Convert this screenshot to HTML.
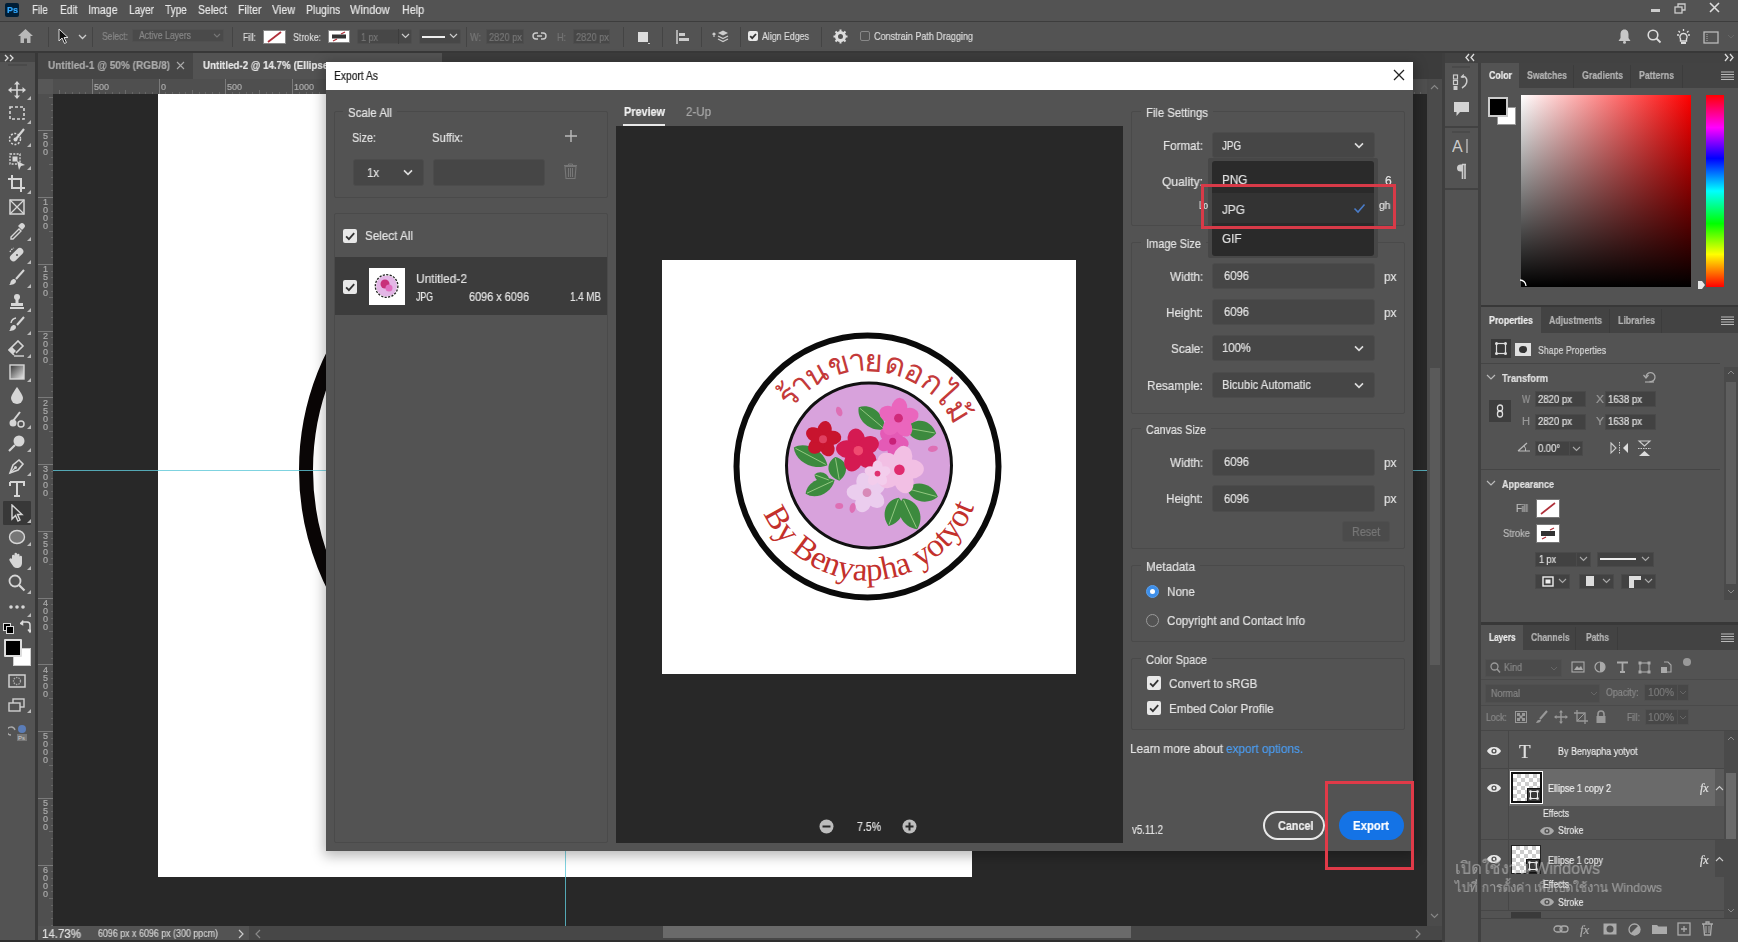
<!DOCTYPE html><html><head><meta charset="utf-8"><style>
html,body{margin:0;padding:0;width:1738px;height:942px;overflow:hidden;background:#535353;font-family:"Liberation Sans",sans-serif}
.a{position:absolute;box-sizing:border-box}
.t{position:absolute;white-space:nowrap;-webkit-text-stroke:0.2px currentColor;will-change:transform}
</style></head><body>
<div class="a " style="left:0px;top:0px;width:1738px;height:21px;background:#535353"></div>
<div class="a " style="left:0px;top:21px;width:1738px;height:1px;background:#3d3d3d"></div>
<div class="a " style="left:0px;top:22px;width:1738px;height:29px;background:#535353"></div>
<div class="a " style="left:0px;top:51px;width:1738px;height:2px;background:#383838"></div>
<div class="a " style="left:0px;top:53px;width:35px;height:889px;background:#535353"></div>
<div class="a " style="left:0px;top:53px;width:35px;height:9px;background:#454545"></div>
<div class="a " style="left:35px;top:53px;width:3px;height:889px;background:#383838"></div>
<div class="a " style="left:38px;top:53px;width:1404px;height:26px;background:#3c3c3c"></div>
<div class="a " style="left:38px;top:53px;width:155px;height:26px;background:#464646"></div>
<div class="a " style="left:193px;top:53px;width:249px;height:26px;background:#535353"></div>
<div class="a " style="left:38px;top:79px;width:1389px;height:15px;background:#4f4f4f"></div>
<div class="a " style="left:38px;top:79px;width:15px;height:847px;background:#4f4f4f"></div>
<div class="a " style="left:38px;top:79px;width:15px;height:15px;background:#555"></div>
<div class="a " style="left:53px;top:94px;width:1374px;height:832px;background:#282828"></div>
<div class="a " style="left:158px;top:94px;width:814px;height:783px;background:#fff"></div>
<div class="a " style="left:1427px;top:79px;width:15px;height:847px;background:#4b4b4b"></div>
<div class="a " style="left:38px;top:926px;width:211px;height:14px;background:#535353"></div>
<div class="a " style="left:249px;top:926px;width:1178px;height:14px;background:#474747"></div>
<div class="a " style="left:663px;top:926px;width:468px;height:12px;background:#6a6a6a"></div>
<div class="a " style="left:1427px;top:926px;width:15px;height:14px;background:#474747"></div>
<div class="a " style="left:0px;top:940px;width:1738px;height:2px;background:#2e2e2e"></div>
<div class="a " style="left:1442px;top:53px;width:3px;height:889px;background:#3e3e3e"></div>
<div class="a " style="left:1445px;top:53px;width:293px;height:10px;background:#424242"></div>
<div class="a " style="left:1445px;top:63px;width:33px;height:879px;background:#535353"></div>
<div class="a " style="left:1478px;top:63px;width:3px;height:879px;background:#404040"></div>
<div class="a " style="left:1481px;top:63px;width:257px;height:879px;background:#535353"></div>
<div class="a" style="left:58.6px;top:90px;width:1px;height:4px;background:#6a6a6a"></div>
<div class="a" style="left:65.2px;top:92px;width:1px;height:2px;background:#666"></div>
<div class="a" style="left:71.9px;top:92px;width:1px;height:2px;background:#666"></div>
<div class="a" style="left:78.6px;top:92px;width:1px;height:2px;background:#666"></div>
<div class="a" style="left:85.3px;top:92px;width:1px;height:2px;background:#666"></div>
<div class="a" style="left:91.9px;top:79px;width:1px;height:15px;background:#7a7a7a"></div>
<div class="a" style="left:98.6px;top:92px;width:1px;height:2px;background:#666"></div>
<div class="a" style="left:105.3px;top:92px;width:1px;height:2px;background:#666"></div>
<div class="a" style="left:112.0px;top:92px;width:1px;height:2px;background:#666"></div>
<div class="a" style="left:118.6px;top:92px;width:1px;height:2px;background:#666"></div>
<div class="a" style="left:125.3px;top:90px;width:1px;height:4px;background:#6a6a6a"></div>
<div class="a" style="left:132.0px;top:92px;width:1px;height:2px;background:#666"></div>
<div class="a" style="left:138.7px;top:92px;width:1px;height:2px;background:#666"></div>
<div class="a" style="left:145.3px;top:92px;width:1px;height:2px;background:#666"></div>
<div class="a" style="left:152.0px;top:92px;width:1px;height:2px;background:#666"></div>
<div class="a" style="left:158.7px;top:79px;width:1px;height:15px;background:#7a7a7a"></div>
<div class="a" style="left:165.4px;top:92px;width:1px;height:2px;background:#666"></div>
<div class="a" style="left:172.0px;top:92px;width:1px;height:2px;background:#666"></div>
<div class="a" style="left:178.7px;top:92px;width:1px;height:2px;background:#666"></div>
<div class="a" style="left:185.4px;top:92px;width:1px;height:2px;background:#666"></div>
<div class="a" style="left:192.1px;top:90px;width:1px;height:4px;background:#6a6a6a"></div>
<div class="a" style="left:198.8px;top:92px;width:1px;height:2px;background:#666"></div>
<div class="a" style="left:205.4px;top:92px;width:1px;height:2px;background:#666"></div>
<div class="a" style="left:212.1px;top:92px;width:1px;height:2px;background:#666"></div>
<div class="a" style="left:218.8px;top:92px;width:1px;height:2px;background:#666"></div>
<div class="a" style="left:225.4px;top:79px;width:1px;height:15px;background:#7a7a7a"></div>
<div class="a" style="left:232.1px;top:92px;width:1px;height:2px;background:#666"></div>
<div class="a" style="left:238.8px;top:92px;width:1px;height:2px;background:#666"></div>
<div class="a" style="left:245.5px;top:92px;width:1px;height:2px;background:#666"></div>
<div class="a" style="left:252.1px;top:92px;width:1px;height:2px;background:#666"></div>
<div class="a" style="left:258.8px;top:90px;width:1px;height:4px;background:#6a6a6a"></div>
<div class="a" style="left:265.5px;top:92px;width:1px;height:2px;background:#666"></div>
<div class="a" style="left:272.2px;top:92px;width:1px;height:2px;background:#666"></div>
<div class="a" style="left:278.9px;top:92px;width:1px;height:2px;background:#666"></div>
<div class="a" style="left:285.5px;top:92px;width:1px;height:2px;background:#666"></div>
<div class="a" style="left:292.2px;top:79px;width:1px;height:15px;background:#7a7a7a"></div>
<div class="a" style="left:298.9px;top:92px;width:1px;height:2px;background:#666"></div>
<div class="a" style="left:305.6px;top:92px;width:1px;height:2px;background:#666"></div>
<div class="a" style="left:312.2px;top:92px;width:1px;height:2px;background:#666"></div>
<div class="a" style="left:318.9px;top:92px;width:1px;height:2px;background:#666"></div>
<div class="a" style="left:325.6px;top:90px;width:1px;height:4px;background:#6a6a6a"></div>
<div class="a" style="left:332.2px;top:92px;width:1px;height:2px;background:#666"></div>
<div class="a" style="left:338.9px;top:92px;width:1px;height:2px;background:#666"></div>
<div class="a" style="left:345.6px;top:92px;width:1px;height:2px;background:#666"></div>
<div class="a" style="left:352.3px;top:92px;width:1px;height:2px;background:#666"></div>
<div class="a" style="left:358.9px;top:79px;width:1px;height:15px;background:#7a7a7a"></div>
<div class="a" style="left:365.6px;top:92px;width:1px;height:2px;background:#666"></div>
<div class="a" style="left:372.3px;top:92px;width:1px;height:2px;background:#666"></div>
<div class="a" style="left:379.0px;top:92px;width:1px;height:2px;background:#666"></div>
<div class="a" style="left:385.6px;top:92px;width:1px;height:2px;background:#666"></div>
<div class="a" style="left:392.3px;top:90px;width:1px;height:4px;background:#6a6a6a"></div>
<div class="a" style="left:399.0px;top:92px;width:1px;height:2px;background:#666"></div>
<div class="a" style="left:405.7px;top:92px;width:1px;height:2px;background:#666"></div>
<div class="a" style="left:412.3px;top:92px;width:1px;height:2px;background:#666"></div>
<div class="a" style="left:419.0px;top:92px;width:1px;height:2px;background:#666"></div>
<div class="a" style="left:425.7px;top:79px;width:1px;height:15px;background:#7a7a7a"></div>
<div class="a" style="left:432.4px;top:92px;width:1px;height:2px;background:#666"></div>
<div class="a" style="left:439.1px;top:92px;width:1px;height:2px;background:#666"></div>
<div class="a" style="left:445.7px;top:92px;width:1px;height:2px;background:#666"></div>
<div class="a" style="left:452.4px;top:92px;width:1px;height:2px;background:#666"></div>
<div class="a" style="left:459.1px;top:90px;width:1px;height:4px;background:#6a6a6a"></div>
<div class="a" style="left:465.7px;top:92px;width:1px;height:2px;background:#666"></div>
<div class="a" style="left:472.4px;top:92px;width:1px;height:2px;background:#666"></div>
<div class="a" style="left:479.1px;top:92px;width:1px;height:2px;background:#666"></div>
<div class="a" style="left:485.8px;top:92px;width:1px;height:2px;background:#666"></div>
<div class="a" style="left:492.4px;top:79px;width:1px;height:15px;background:#7a7a7a"></div>
<div class="a" style="left:499.1px;top:92px;width:1px;height:2px;background:#666"></div>
<div class="a" style="left:505.8px;top:92px;width:1px;height:2px;background:#666"></div>
<div class="a" style="left:512.5px;top:92px;width:1px;height:2px;background:#666"></div>
<div class="a" style="left:519.2px;top:92px;width:1px;height:2px;background:#666"></div>
<div class="a" style="left:525.8px;top:90px;width:1px;height:4px;background:#6a6a6a"></div>
<div class="a" style="left:532.5px;top:92px;width:1px;height:2px;background:#666"></div>
<div class="a" style="left:539.2px;top:92px;width:1px;height:2px;background:#666"></div>
<div class="a" style="left:545.8px;top:92px;width:1px;height:2px;background:#666"></div>
<div class="a" style="left:552.5px;top:92px;width:1px;height:2px;background:#666"></div>
<div class="a" style="left:559.2px;top:79px;width:1px;height:15px;background:#7a7a7a"></div>
<div class="a" style="left:565.9px;top:92px;width:1px;height:2px;background:#666"></div>
<div class="a" style="left:572.5px;top:92px;width:1px;height:2px;background:#666"></div>
<div class="a" style="left:579.2px;top:92px;width:1px;height:2px;background:#666"></div>
<div class="a" style="left:585.9px;top:92px;width:1px;height:2px;background:#666"></div>
<div class="a" style="left:592.6px;top:90px;width:1px;height:4px;background:#6a6a6a"></div>
<div class="a" style="left:599.2px;top:92px;width:1px;height:2px;background:#666"></div>
<div class="a" style="left:605.9px;top:92px;width:1px;height:2px;background:#666"></div>
<div class="a" style="left:612.6px;top:92px;width:1px;height:2px;background:#666"></div>
<div class="a" style="left:619.3px;top:92px;width:1px;height:2px;background:#666"></div>
<div class="a" style="left:626.0px;top:79px;width:1px;height:15px;background:#7a7a7a"></div>
<div class="a" style="left:632.6px;top:92px;width:1px;height:2px;background:#666"></div>
<div class="a" style="left:639.3px;top:92px;width:1px;height:2px;background:#666"></div>
<div class="a" style="left:646.0px;top:92px;width:1px;height:2px;background:#666"></div>
<div class="a" style="left:652.7px;top:92px;width:1px;height:2px;background:#666"></div>
<div class="a" style="left:659.3px;top:90px;width:1px;height:4px;background:#6a6a6a"></div>
<div class="a" style="left:666.0px;top:92px;width:1px;height:2px;background:#666"></div>
<div class="a" style="left:672.7px;top:92px;width:1px;height:2px;background:#666"></div>
<div class="a" style="left:679.3px;top:92px;width:1px;height:2px;background:#666"></div>
<div class="a" style="left:686.0px;top:92px;width:1px;height:2px;background:#666"></div>
<div class="a" style="left:692.7px;top:79px;width:1px;height:15px;background:#7a7a7a"></div>
<div class="a" style="left:699.4px;top:92px;width:1px;height:2px;background:#666"></div>
<div class="a" style="left:706.0px;top:92px;width:1px;height:2px;background:#666"></div>
<div class="a" style="left:712.7px;top:92px;width:1px;height:2px;background:#666"></div>
<div class="a" style="left:719.4px;top:92px;width:1px;height:2px;background:#666"></div>
<div class="a" style="left:726.1px;top:90px;width:1px;height:4px;background:#6a6a6a"></div>
<div class="a" style="left:732.8px;top:92px;width:1px;height:2px;background:#666"></div>
<div class="a" style="left:739.4px;top:92px;width:1px;height:2px;background:#666"></div>
<div class="a" style="left:746.1px;top:92px;width:1px;height:2px;background:#666"></div>
<div class="a" style="left:752.8px;top:92px;width:1px;height:2px;background:#666"></div>
<div class="a" style="left:759.5px;top:79px;width:1px;height:15px;background:#7a7a7a"></div>
<div class="a" style="left:766.1px;top:92px;width:1px;height:2px;background:#666"></div>
<div class="a" style="left:772.8px;top:92px;width:1px;height:2px;background:#666"></div>
<div class="a" style="left:779.5px;top:92px;width:1px;height:2px;background:#666"></div>
<div class="a" style="left:786.2px;top:92px;width:1px;height:2px;background:#666"></div>
<div class="a" style="left:792.8px;top:90px;width:1px;height:4px;background:#6a6a6a"></div>
<div class="a" style="left:799.5px;top:92px;width:1px;height:2px;background:#666"></div>
<div class="a" style="left:806.2px;top:92px;width:1px;height:2px;background:#666"></div>
<div class="a" style="left:812.9px;top:92px;width:1px;height:2px;background:#666"></div>
<div class="a" style="left:819.5px;top:92px;width:1px;height:2px;background:#666"></div>
<div class="a" style="left:826.2px;top:79px;width:1px;height:15px;background:#7a7a7a"></div>
<div class="a" style="left:832.9px;top:92px;width:1px;height:2px;background:#666"></div>
<div class="a" style="left:839.5px;top:92px;width:1px;height:2px;background:#666"></div>
<div class="a" style="left:846.2px;top:92px;width:1px;height:2px;background:#666"></div>
<div class="a" style="left:852.9px;top:92px;width:1px;height:2px;background:#666"></div>
<div class="a" style="left:859.6px;top:90px;width:1px;height:4px;background:#6a6a6a"></div>
<div class="a" style="left:866.2px;top:92px;width:1px;height:2px;background:#666"></div>
<div class="a" style="left:872.9px;top:92px;width:1px;height:2px;background:#666"></div>
<div class="a" style="left:879.6px;top:92px;width:1px;height:2px;background:#666"></div>
<div class="a" style="left:886.3px;top:92px;width:1px;height:2px;background:#666"></div>
<div class="a" style="left:893.0px;top:79px;width:1px;height:15px;background:#7a7a7a"></div>
<div class="a" style="left:899.6px;top:92px;width:1px;height:2px;background:#666"></div>
<div class="a" style="left:906.3px;top:92px;width:1px;height:2px;background:#666"></div>
<div class="a" style="left:913.0px;top:92px;width:1px;height:2px;background:#666"></div>
<div class="a" style="left:919.7px;top:92px;width:1px;height:2px;background:#666"></div>
<div class="a" style="left:926.3px;top:90px;width:1px;height:4px;background:#6a6a6a"></div>
<div class="a" style="left:933.0px;top:92px;width:1px;height:2px;background:#666"></div>
<div class="a" style="left:939.7px;top:92px;width:1px;height:2px;background:#666"></div>
<div class="a" style="left:946.4px;top:92px;width:1px;height:2px;background:#666"></div>
<div class="a" style="left:953.0px;top:92px;width:1px;height:2px;background:#666"></div>
<div class="a" style="left:959.7px;top:79px;width:1px;height:15px;background:#7a7a7a"></div>
<div class="a" style="left:966.4px;top:92px;width:1px;height:2px;background:#666"></div>
<div class="a" style="left:973.0px;top:92px;width:1px;height:2px;background:#666"></div>
<div class="a" style="left:979.7px;top:92px;width:1px;height:2px;background:#666"></div>
<div class="a" style="left:986.4px;top:92px;width:1px;height:2px;background:#666"></div>
<div class="a" style="left:993.1px;top:90px;width:1px;height:4px;background:#6a6a6a"></div>
<div class="a" style="left:999.8px;top:92px;width:1px;height:2px;background:#666"></div>
<div class="a" style="left:1006.4px;top:92px;width:1px;height:2px;background:#666"></div>
<div class="a" style="left:1013.1px;top:92px;width:1px;height:2px;background:#666"></div>
<div class="a" style="left:1019.8px;top:92px;width:1px;height:2px;background:#666"></div>
<div class="a" style="left:1026.5px;top:79px;width:1px;height:15px;background:#7a7a7a"></div>
<div class="a" style="left:1033.1px;top:92px;width:1px;height:2px;background:#666"></div>
<div class="a" style="left:1039.8px;top:92px;width:1px;height:2px;background:#666"></div>
<div class="a" style="left:1046.5px;top:92px;width:1px;height:2px;background:#666"></div>
<div class="a" style="left:1053.2px;top:92px;width:1px;height:2px;background:#666"></div>
<div class="a" style="left:1059.8px;top:90px;width:1px;height:4px;background:#6a6a6a"></div>
<div class="a" style="left:1066.5px;top:92px;width:1px;height:2px;background:#666"></div>
<div class="a" style="left:1073.2px;top:92px;width:1px;height:2px;background:#666"></div>
<div class="a" style="left:1079.9px;top:92px;width:1px;height:2px;background:#666"></div>
<div class="a" style="left:1086.5px;top:92px;width:1px;height:2px;background:#666"></div>
<div class="a" style="left:1093.2px;top:79px;width:1px;height:15px;background:#7a7a7a"></div>
<div class="a" style="left:1099.9px;top:92px;width:1px;height:2px;background:#666"></div>
<div class="a" style="left:1106.5px;top:92px;width:1px;height:2px;background:#666"></div>
<div class="a" style="left:1113.2px;top:92px;width:1px;height:2px;background:#666"></div>
<div class="a" style="left:1119.9px;top:92px;width:1px;height:2px;background:#666"></div>
<div class="a" style="left:1126.6px;top:90px;width:1px;height:4px;background:#6a6a6a"></div>
<div class="a" style="left:1133.2px;top:92px;width:1px;height:2px;background:#666"></div>
<div class="a" style="left:1139.9px;top:92px;width:1px;height:2px;background:#666"></div>
<div class="a" style="left:1146.6px;top:92px;width:1px;height:2px;background:#666"></div>
<div class="a" style="left:1153.3px;top:92px;width:1px;height:2px;background:#666"></div>
<div class="a" style="left:1160.0px;top:79px;width:1px;height:15px;background:#7a7a7a"></div>
<div class="a" style="left:1166.6px;top:92px;width:1px;height:2px;background:#666"></div>
<div class="a" style="left:1173.3px;top:92px;width:1px;height:2px;background:#666"></div>
<div class="a" style="left:1180.0px;top:92px;width:1px;height:2px;background:#666"></div>
<div class="a" style="left:1186.7px;top:92px;width:1px;height:2px;background:#666"></div>
<div class="a" style="left:1193.3px;top:90px;width:1px;height:4px;background:#6a6a6a"></div>
<div class="a" style="left:1200.0px;top:92px;width:1px;height:2px;background:#666"></div>
<div class="a" style="left:1206.7px;top:92px;width:1px;height:2px;background:#666"></div>
<div class="a" style="left:1213.4px;top:92px;width:1px;height:2px;background:#666"></div>
<div class="a" style="left:1220.0px;top:92px;width:1px;height:2px;background:#666"></div>
<div class="a" style="left:1226.7px;top:79px;width:1px;height:15px;background:#7a7a7a"></div>
<div class="a" style="left:1233.4px;top:92px;width:1px;height:2px;background:#666"></div>
<div class="a" style="left:1240.0px;top:92px;width:1px;height:2px;background:#666"></div>
<div class="a" style="left:1246.7px;top:92px;width:1px;height:2px;background:#666"></div>
<div class="a" style="left:1253.4px;top:92px;width:1px;height:2px;background:#666"></div>
<div class="a" style="left:1260.1px;top:90px;width:1px;height:4px;background:#6a6a6a"></div>
<div class="a" style="left:1266.8px;top:92px;width:1px;height:2px;background:#666"></div>
<div class="a" style="left:1273.4px;top:92px;width:1px;height:2px;background:#666"></div>
<div class="a" style="left:1280.1px;top:92px;width:1px;height:2px;background:#666"></div>
<div class="a" style="left:1286.8px;top:92px;width:1px;height:2px;background:#666"></div>
<div class="a" style="left:1293.5px;top:79px;width:1px;height:15px;background:#7a7a7a"></div>
<div class="a" style="left:1300.1px;top:92px;width:1px;height:2px;background:#666"></div>
<div class="a" style="left:1306.8px;top:92px;width:1px;height:2px;background:#666"></div>
<div class="a" style="left:1313.5px;top:92px;width:1px;height:2px;background:#666"></div>
<div class="a" style="left:1320.1px;top:92px;width:1px;height:2px;background:#666"></div>
<div class="a" style="left:1326.8px;top:90px;width:1px;height:4px;background:#6a6a6a"></div>
<div class="a" style="left:1333.5px;top:92px;width:1px;height:2px;background:#666"></div>
<div class="a" style="left:1340.2px;top:92px;width:1px;height:2px;background:#666"></div>
<div class="a" style="left:1346.9px;top:92px;width:1px;height:2px;background:#666"></div>
<div class="a" style="left:1353.5px;top:92px;width:1px;height:2px;background:#666"></div>
<div class="a" style="left:1360.2px;top:79px;width:1px;height:15px;background:#7a7a7a"></div>
<div class="a" style="left:1366.9px;top:92px;width:1px;height:2px;background:#666"></div>
<div class="a" style="left:1373.5px;top:92px;width:1px;height:2px;background:#666"></div>
<div class="a" style="left:1380.2px;top:92px;width:1px;height:2px;background:#666"></div>
<div class="a" style="left:1386.9px;top:92px;width:1px;height:2px;background:#666"></div>
<div class="a" style="left:1393.6px;top:90px;width:1px;height:4px;background:#6a6a6a"></div>
<div class="a" style="left:1400.3px;top:92px;width:1px;height:2px;background:#666"></div>
<div class="a" style="left:1406.9px;top:92px;width:1px;height:2px;background:#666"></div>
<div class="a" style="left:1413.6px;top:92px;width:1px;height:2px;background:#666"></div>
<div class="a" style="left:1420.3px;top:92px;width:1px;height:2px;background:#666"></div>
<div class="t" style="left:93.9px;top:82.7px;font-size:9px;line-height:9px;color:#aaa;font-weight:normal;font-family:'Liberation Sans', sans-serif;">500</div>
<div class="t" style="left:160.7px;top:82.7px;font-size:9px;line-height:9px;color:#aaa;font-weight:normal;font-family:'Liberation Sans', sans-serif;">0</div>
<div class="t" style="left:227.4px;top:82.7px;font-size:9px;line-height:9px;color:#aaa;font-weight:normal;font-family:'Liberation Sans', sans-serif;">500</div>
<div class="t" style="left:294.2px;top:82.7px;font-size:9px;line-height:9px;color:#aaa;font-weight:normal;font-family:'Liberation Sans', sans-serif;">1000</div>
<div class="t" style="left:360.9px;top:82.7px;font-size:9px;line-height:9px;color:#aaa;font-weight:normal;font-family:'Liberation Sans', sans-serif;">1500</div>
<div class="a" style="left:49px;top:97.0px;width:4px;height:1px;background:#6a6a6a"></div>
<div class="a" style="left:51px;top:103.7px;width:2px;height:1px;background:#666"></div>
<div class="a" style="left:51px;top:110.3px;width:2px;height:1px;background:#666"></div>
<div class="a" style="left:51px;top:117.0px;width:2px;height:1px;background:#666"></div>
<div class="a" style="left:51px;top:123.7px;width:2px;height:1px;background:#666"></div>
<div class="a" style="left:38px;top:130.3px;width:15px;height:1px;background:#7a7a7a"></div>
<div class="a" style="left:51px;top:137.0px;width:2px;height:1px;background:#666"></div>
<div class="a" style="left:51px;top:143.7px;width:2px;height:1px;background:#666"></div>
<div class="a" style="left:51px;top:150.4px;width:2px;height:1px;background:#666"></div>
<div class="a" style="left:51px;top:157.0px;width:2px;height:1px;background:#666"></div>
<div class="a" style="left:49px;top:163.7px;width:4px;height:1px;background:#6a6a6a"></div>
<div class="a" style="left:51px;top:170.4px;width:2px;height:1px;background:#666"></div>
<div class="a" style="left:51px;top:177.1px;width:2px;height:1px;background:#666"></div>
<div class="a" style="left:51px;top:183.8px;width:2px;height:1px;background:#666"></div>
<div class="a" style="left:51px;top:190.4px;width:2px;height:1px;background:#666"></div>
<div class="a" style="left:38px;top:197.1px;width:15px;height:1px;background:#7a7a7a"></div>
<div class="a" style="left:51px;top:203.8px;width:2px;height:1px;background:#666"></div>
<div class="a" style="left:51px;top:210.5px;width:2px;height:1px;background:#666"></div>
<div class="a" style="left:51px;top:217.1px;width:2px;height:1px;background:#666"></div>
<div class="a" style="left:51px;top:223.8px;width:2px;height:1px;background:#666"></div>
<div class="a" style="left:49px;top:230.5px;width:4px;height:1px;background:#6a6a6a"></div>
<div class="a" style="left:51px;top:237.2px;width:2px;height:1px;background:#666"></div>
<div class="a" style="left:51px;top:243.8px;width:2px;height:1px;background:#666"></div>
<div class="a" style="left:51px;top:250.5px;width:2px;height:1px;background:#666"></div>
<div class="a" style="left:51px;top:257.2px;width:2px;height:1px;background:#666"></div>
<div class="a" style="left:38px;top:263.9px;width:15px;height:1px;background:#7a7a7a"></div>
<div class="a" style="left:51px;top:270.5px;width:2px;height:1px;background:#666"></div>
<div class="a" style="left:51px;top:277.2px;width:2px;height:1px;background:#666"></div>
<div class="a" style="left:51px;top:283.9px;width:2px;height:1px;background:#666"></div>
<div class="a" style="left:51px;top:290.6px;width:2px;height:1px;background:#666"></div>
<div class="a" style="left:49px;top:297.2px;width:4px;height:1px;background:#6a6a6a"></div>
<div class="a" style="left:51px;top:303.9px;width:2px;height:1px;background:#666"></div>
<div class="a" style="left:51px;top:310.6px;width:2px;height:1px;background:#666"></div>
<div class="a" style="left:51px;top:317.2px;width:2px;height:1px;background:#666"></div>
<div class="a" style="left:51px;top:323.9px;width:2px;height:1px;background:#666"></div>
<div class="a" style="left:38px;top:330.6px;width:15px;height:1px;background:#7a7a7a"></div>
<div class="a" style="left:51px;top:337.3px;width:2px;height:1px;background:#666"></div>
<div class="a" style="left:51px;top:344.0px;width:2px;height:1px;background:#666"></div>
<div class="a" style="left:51px;top:350.6px;width:2px;height:1px;background:#666"></div>
<div class="a" style="left:51px;top:357.3px;width:2px;height:1px;background:#666"></div>
<div class="a" style="left:49px;top:364.0px;width:4px;height:1px;background:#6a6a6a"></div>
<div class="a" style="left:51px;top:370.6px;width:2px;height:1px;background:#666"></div>
<div class="a" style="left:51px;top:377.3px;width:2px;height:1px;background:#666"></div>
<div class="a" style="left:51px;top:384.0px;width:2px;height:1px;background:#666"></div>
<div class="a" style="left:51px;top:390.7px;width:2px;height:1px;background:#666"></div>
<div class="a" style="left:38px;top:397.4px;width:15px;height:1px;background:#7a7a7a"></div>
<div class="a" style="left:51px;top:404.0px;width:2px;height:1px;background:#666"></div>
<div class="a" style="left:51px;top:410.7px;width:2px;height:1px;background:#666"></div>
<div class="a" style="left:51px;top:417.4px;width:2px;height:1px;background:#666"></div>
<div class="a" style="left:51px;top:424.1px;width:2px;height:1px;background:#666"></div>
<div class="a" style="left:49px;top:430.7px;width:4px;height:1px;background:#6a6a6a"></div>
<div class="a" style="left:51px;top:437.4px;width:2px;height:1px;background:#666"></div>
<div class="a" style="left:51px;top:444.1px;width:2px;height:1px;background:#666"></div>
<div class="a" style="left:51px;top:450.8px;width:2px;height:1px;background:#666"></div>
<div class="a" style="left:51px;top:457.4px;width:2px;height:1px;background:#666"></div>
<div class="a" style="left:38px;top:464.1px;width:15px;height:1px;background:#7a7a7a"></div>
<div class="a" style="left:51px;top:470.8px;width:2px;height:1px;background:#666"></div>
<div class="a" style="left:51px;top:477.5px;width:2px;height:1px;background:#666"></div>
<div class="a" style="left:51px;top:484.1px;width:2px;height:1px;background:#666"></div>
<div class="a" style="left:51px;top:490.8px;width:2px;height:1px;background:#666"></div>
<div class="a" style="left:49px;top:497.5px;width:4px;height:1px;background:#6a6a6a"></div>
<div class="a" style="left:51px;top:504.1px;width:2px;height:1px;background:#666"></div>
<div class="a" style="left:51px;top:510.8px;width:2px;height:1px;background:#666"></div>
<div class="a" style="left:51px;top:517.5px;width:2px;height:1px;background:#666"></div>
<div class="a" style="left:51px;top:524.2px;width:2px;height:1px;background:#666"></div>
<div class="a" style="left:38px;top:530.9px;width:15px;height:1px;background:#7a7a7a"></div>
<div class="a" style="left:51px;top:537.5px;width:2px;height:1px;background:#666"></div>
<div class="a" style="left:51px;top:544.2px;width:2px;height:1px;background:#666"></div>
<div class="a" style="left:51px;top:550.9px;width:2px;height:1px;background:#666"></div>
<div class="a" style="left:51px;top:557.6px;width:2px;height:1px;background:#666"></div>
<div class="a" style="left:49px;top:564.2px;width:4px;height:1px;background:#6a6a6a"></div>
<div class="a" style="left:51px;top:570.9px;width:2px;height:1px;background:#666"></div>
<div class="a" style="left:51px;top:577.6px;width:2px;height:1px;background:#666"></div>
<div class="a" style="left:51px;top:584.2px;width:2px;height:1px;background:#666"></div>
<div class="a" style="left:51px;top:590.9px;width:2px;height:1px;background:#666"></div>
<div class="a" style="left:38px;top:597.6px;width:15px;height:1px;background:#7a7a7a"></div>
<div class="a" style="left:51px;top:604.3px;width:2px;height:1px;background:#666"></div>
<div class="a" style="left:51px;top:610.9px;width:2px;height:1px;background:#666"></div>
<div class="a" style="left:51px;top:617.6px;width:2px;height:1px;background:#666"></div>
<div class="a" style="left:51px;top:624.3px;width:2px;height:1px;background:#666"></div>
<div class="a" style="left:49px;top:631.0px;width:4px;height:1px;background:#6a6a6a"></div>
<div class="a" style="left:51px;top:637.6px;width:2px;height:1px;background:#666"></div>
<div class="a" style="left:51px;top:644.3px;width:2px;height:1px;background:#666"></div>
<div class="a" style="left:51px;top:651.0px;width:2px;height:1px;background:#666"></div>
<div class="a" style="left:51px;top:657.7px;width:2px;height:1px;background:#666"></div>
<div class="a" style="left:38px;top:664.4px;width:15px;height:1px;background:#7a7a7a"></div>
<div class="a" style="left:51px;top:671.0px;width:2px;height:1px;background:#666"></div>
<div class="a" style="left:51px;top:677.7px;width:2px;height:1px;background:#666"></div>
<div class="a" style="left:51px;top:684.4px;width:2px;height:1px;background:#666"></div>
<div class="a" style="left:51px;top:691.1px;width:2px;height:1px;background:#666"></div>
<div class="a" style="left:49px;top:697.7px;width:4px;height:1px;background:#6a6a6a"></div>
<div class="a" style="left:51px;top:704.4px;width:2px;height:1px;background:#666"></div>
<div class="a" style="left:51px;top:711.1px;width:2px;height:1px;background:#666"></div>
<div class="a" style="left:51px;top:717.8px;width:2px;height:1px;background:#666"></div>
<div class="a" style="left:51px;top:724.4px;width:2px;height:1px;background:#666"></div>
<div class="a" style="left:38px;top:731.1px;width:15px;height:1px;background:#7a7a7a"></div>
<div class="a" style="left:51px;top:737.8px;width:2px;height:1px;background:#666"></div>
<div class="a" style="left:51px;top:744.4px;width:2px;height:1px;background:#666"></div>
<div class="a" style="left:51px;top:751.1px;width:2px;height:1px;background:#666"></div>
<div class="a" style="left:51px;top:757.8px;width:2px;height:1px;background:#666"></div>
<div class="a" style="left:49px;top:764.5px;width:4px;height:1px;background:#6a6a6a"></div>
<div class="a" style="left:51px;top:771.1px;width:2px;height:1px;background:#666"></div>
<div class="a" style="left:51px;top:777.8px;width:2px;height:1px;background:#666"></div>
<div class="a" style="left:51px;top:784.5px;width:2px;height:1px;background:#666"></div>
<div class="a" style="left:51px;top:791.2px;width:2px;height:1px;background:#666"></div>
<div class="a" style="left:38px;top:797.9px;width:15px;height:1px;background:#7a7a7a"></div>
<div class="a" style="left:51px;top:804.5px;width:2px;height:1px;background:#666"></div>
<div class="a" style="left:51px;top:811.2px;width:2px;height:1px;background:#666"></div>
<div class="a" style="left:51px;top:817.9px;width:2px;height:1px;background:#666"></div>
<div class="a" style="left:51px;top:824.6px;width:2px;height:1px;background:#666"></div>
<div class="a" style="left:49px;top:831.2px;width:4px;height:1px;background:#6a6a6a"></div>
<div class="a" style="left:51px;top:837.9px;width:2px;height:1px;background:#666"></div>
<div class="a" style="left:51px;top:844.6px;width:2px;height:1px;background:#666"></div>
<div class="a" style="left:51px;top:851.3px;width:2px;height:1px;background:#666"></div>
<div class="a" style="left:51px;top:857.9px;width:2px;height:1px;background:#666"></div>
<div class="a" style="left:38px;top:864.6px;width:15px;height:1px;background:#7a7a7a"></div>
<div class="a" style="left:51px;top:871.3px;width:2px;height:1px;background:#666"></div>
<div class="a" style="left:51px;top:877.9px;width:2px;height:1px;background:#666"></div>
<div class="a" style="left:51px;top:884.6px;width:2px;height:1px;background:#666"></div>
<div class="a" style="left:51px;top:891.3px;width:2px;height:1px;background:#666"></div>
<div class="a" style="left:49px;top:898.0px;width:4px;height:1px;background:#6a6a6a"></div>
<div class="a" style="left:51px;top:904.6px;width:2px;height:1px;background:#666"></div>
<div class="a" style="left:51px;top:911.3px;width:2px;height:1px;background:#666"></div>
<div class="a" style="left:51px;top:918.0px;width:2px;height:1px;background:#666"></div>
<div class="a" style="left:51px;top:924.7px;width:2px;height:1px;background:#666"></div>
<div class="t" style="left:43.0px;top:131.5px;font-size:9px;line-height:9px;color:#aaa;font-weight:normal;font-family:'Liberation Sans', sans-serif;">5</div>
<div class="t" style="left:43.0px;top:139.5px;font-size:9px;line-height:9px;color:#aaa;font-weight:normal;font-family:'Liberation Sans', sans-serif;">0</div>
<div class="t" style="left:43.0px;top:147.5px;font-size:9px;line-height:9px;color:#aaa;font-weight:normal;font-family:'Liberation Sans', sans-serif;">0</div>
<div class="t" style="left:43.0px;top:198.3px;font-size:9px;line-height:9px;color:#aaa;font-weight:normal;font-family:'Liberation Sans', sans-serif;">1</div>
<div class="t" style="left:43.0px;top:206.3px;font-size:9px;line-height:9px;color:#aaa;font-weight:normal;font-family:'Liberation Sans', sans-serif;">0</div>
<div class="t" style="left:43.0px;top:214.3px;font-size:9px;line-height:9px;color:#aaa;font-weight:normal;font-family:'Liberation Sans', sans-serif;">0</div>
<div class="t" style="left:43.0px;top:222.3px;font-size:9px;line-height:9px;color:#aaa;font-weight:normal;font-family:'Liberation Sans', sans-serif;">0</div>
<div class="t" style="left:43.0px;top:265.0px;font-size:9px;line-height:9px;color:#aaa;font-weight:normal;font-family:'Liberation Sans', sans-serif;">1</div>
<div class="t" style="left:43.0px;top:273.0px;font-size:9px;line-height:9px;color:#aaa;font-weight:normal;font-family:'Liberation Sans', sans-serif;">5</div>
<div class="t" style="left:43.0px;top:281.0px;font-size:9px;line-height:9px;color:#aaa;font-weight:normal;font-family:'Liberation Sans', sans-serif;">0</div>
<div class="t" style="left:43.0px;top:289.0px;font-size:9px;line-height:9px;color:#aaa;font-weight:normal;font-family:'Liberation Sans', sans-serif;">0</div>
<div class="t" style="left:43.0px;top:331.8px;font-size:9px;line-height:9px;color:#aaa;font-weight:normal;font-family:'Liberation Sans', sans-serif;">2</div>
<div class="t" style="left:43.0px;top:339.8px;font-size:9px;line-height:9px;color:#aaa;font-weight:normal;font-family:'Liberation Sans', sans-serif;">0</div>
<div class="t" style="left:43.0px;top:347.8px;font-size:9px;line-height:9px;color:#aaa;font-weight:normal;font-family:'Liberation Sans', sans-serif;">0</div>
<div class="t" style="left:43.0px;top:355.8px;font-size:9px;line-height:9px;color:#aaa;font-weight:normal;font-family:'Liberation Sans', sans-serif;">0</div>
<div class="t" style="left:43.0px;top:398.5px;font-size:9px;line-height:9px;color:#aaa;font-weight:normal;font-family:'Liberation Sans', sans-serif;">2</div>
<div class="t" style="left:43.0px;top:406.5px;font-size:9px;line-height:9px;color:#aaa;font-weight:normal;font-family:'Liberation Sans', sans-serif;">5</div>
<div class="t" style="left:43.0px;top:414.5px;font-size:9px;line-height:9px;color:#aaa;font-weight:normal;font-family:'Liberation Sans', sans-serif;">0</div>
<div class="t" style="left:43.0px;top:422.5px;font-size:9px;line-height:9px;color:#aaa;font-weight:normal;font-family:'Liberation Sans', sans-serif;">0</div>
<div class="t" style="left:43.0px;top:465.3px;font-size:9px;line-height:9px;color:#aaa;font-weight:normal;font-family:'Liberation Sans', sans-serif;">3</div>
<div class="t" style="left:43.0px;top:473.3px;font-size:9px;line-height:9px;color:#aaa;font-weight:normal;font-family:'Liberation Sans', sans-serif;">0</div>
<div class="t" style="left:43.0px;top:481.3px;font-size:9px;line-height:9px;color:#aaa;font-weight:normal;font-family:'Liberation Sans', sans-serif;">0</div>
<div class="t" style="left:43.0px;top:489.3px;font-size:9px;line-height:9px;color:#aaa;font-weight:normal;font-family:'Liberation Sans', sans-serif;">0</div>
<div class="t" style="left:43.0px;top:532.0px;font-size:9px;line-height:9px;color:#aaa;font-weight:normal;font-family:'Liberation Sans', sans-serif;">3</div>
<div class="t" style="left:43.0px;top:540.0px;font-size:9px;line-height:9px;color:#aaa;font-weight:normal;font-family:'Liberation Sans', sans-serif;">5</div>
<div class="t" style="left:43.0px;top:548.0px;font-size:9px;line-height:9px;color:#aaa;font-weight:normal;font-family:'Liberation Sans', sans-serif;">0</div>
<div class="t" style="left:43.0px;top:556.0px;font-size:9px;line-height:9px;color:#aaa;font-weight:normal;font-family:'Liberation Sans', sans-serif;">0</div>
<div class="t" style="left:43.0px;top:598.8px;font-size:9px;line-height:9px;color:#aaa;font-weight:normal;font-family:'Liberation Sans', sans-serif;">4</div>
<div class="t" style="left:43.0px;top:606.8px;font-size:9px;line-height:9px;color:#aaa;font-weight:normal;font-family:'Liberation Sans', sans-serif;">0</div>
<div class="t" style="left:43.0px;top:614.8px;font-size:9px;line-height:9px;color:#aaa;font-weight:normal;font-family:'Liberation Sans', sans-serif;">0</div>
<div class="t" style="left:43.0px;top:622.8px;font-size:9px;line-height:9px;color:#aaa;font-weight:normal;font-family:'Liberation Sans', sans-serif;">0</div>
<div class="t" style="left:43.0px;top:665.5px;font-size:9px;line-height:9px;color:#aaa;font-weight:normal;font-family:'Liberation Sans', sans-serif;">4</div>
<div class="t" style="left:43.0px;top:673.5px;font-size:9px;line-height:9px;color:#aaa;font-weight:normal;font-family:'Liberation Sans', sans-serif;">5</div>
<div class="t" style="left:43.0px;top:681.5px;font-size:9px;line-height:9px;color:#aaa;font-weight:normal;font-family:'Liberation Sans', sans-serif;">0</div>
<div class="t" style="left:43.0px;top:689.5px;font-size:9px;line-height:9px;color:#aaa;font-weight:normal;font-family:'Liberation Sans', sans-serif;">0</div>
<div class="t" style="left:43.0px;top:732.3px;font-size:9px;line-height:9px;color:#aaa;font-weight:normal;font-family:'Liberation Sans', sans-serif;">5</div>
<div class="t" style="left:43.0px;top:740.3px;font-size:9px;line-height:9px;color:#aaa;font-weight:normal;font-family:'Liberation Sans', sans-serif;">0</div>
<div class="t" style="left:43.0px;top:748.3px;font-size:9px;line-height:9px;color:#aaa;font-weight:normal;font-family:'Liberation Sans', sans-serif;">0</div>
<div class="t" style="left:43.0px;top:756.3px;font-size:9px;line-height:9px;color:#aaa;font-weight:normal;font-family:'Liberation Sans', sans-serif;">0</div>
<div class="t" style="left:43.0px;top:799.0px;font-size:9px;line-height:9px;color:#aaa;font-weight:normal;font-family:'Liberation Sans', sans-serif;">5</div>
<div class="t" style="left:43.0px;top:807.0px;font-size:9px;line-height:9px;color:#aaa;font-weight:normal;font-family:'Liberation Sans', sans-serif;">5</div>
<div class="t" style="left:43.0px;top:815.0px;font-size:9px;line-height:9px;color:#aaa;font-weight:normal;font-family:'Liberation Sans', sans-serif;">0</div>
<div class="t" style="left:43.0px;top:823.0px;font-size:9px;line-height:9px;color:#aaa;font-weight:normal;font-family:'Liberation Sans', sans-serif;">0</div>
<div class="t" style="left:43.0px;top:865.8px;font-size:9px;line-height:9px;color:#aaa;font-weight:normal;font-family:'Liberation Sans', sans-serif;">6</div>
<div class="t" style="left:43.0px;top:873.8px;font-size:9px;line-height:9px;color:#aaa;font-weight:normal;font-family:'Liberation Sans', sans-serif;">0</div>
<div class="t" style="left:43.0px;top:881.8px;font-size:9px;line-height:9px;color:#aaa;font-weight:normal;font-family:'Liberation Sans', sans-serif;">0</div>
<div class="t" style="left:43.0px;top:889.8px;font-size:9px;line-height:9px;color:#aaa;font-weight:normal;font-family:'Liberation Sans', sans-serif;">0</div>
<svg class="a" style="left:53px;top:94px;overflow:hidden" width="1374" height="832" viewBox="0 0 1374 832"><circle cx="512" cy="376" r="259" fill="none" stroke="#0a0606" stroke-width="14"/></svg>
<div class="a " style="left:53px;top:470px;width:1374px;height:1px;background:#5fc8d8;opacity:.8"></div>
<div class="a " style="left:565px;top:94px;width:1px;height:832px;background:#5fc8d8;opacity:.8"></div>
<div class="a " style="left:5px;top:3px;width:14px;height:14px;background:#001e36;border-radius:2px"></div>
<div class="t" style="left:6.5px;top:5.7px;font-size:9px;line-height:9px;color:#31a8ff;font-weight:bold;font-family:'Liberation Sans', sans-serif;">Ps</div>
<div class="t" style="left:32.1px;top:3.7px;font-size:12px;line-height:12px;color:#e6e6e6;font-weight:normal;font-family:'Liberation Sans', sans-serif;transform:scaleX(0.8120);transform-origin:0 0;">File</div>
<div class="t" style="left:59.5px;top:3.7px;font-size:12px;line-height:12px;color:#e6e6e6;font-weight:normal;font-family:'Liberation Sans', sans-serif;transform:scaleX(0.8463);transform-origin:0 0;">Edit</div>
<div class="t" style="left:88.0px;top:3.7px;font-size:12px;line-height:12px;color:#e6e6e6;font-weight:normal;font-family:'Liberation Sans', sans-serif;transform:scaleX(0.8876);transform-origin:0 0;">Image</div>
<div class="t" style="left:128.8px;top:3.7px;font-size:12px;line-height:12px;color:#e6e6e6;font-weight:normal;font-family:'Liberation Sans', sans-serif;transform:scaleX(0.8329);transform-origin:0 0;">Layer</div>
<div class="t" style="left:165.2px;top:3.7px;font-size:12px;line-height:12px;color:#e6e6e6;font-weight:normal;font-family:'Liberation Sans', sans-serif;transform:scaleX(0.8380);transform-origin:0 0;">Type</div>
<div class="t" style="left:198.0px;top:3.7px;font-size:12px;line-height:12px;color:#e6e6e6;font-weight:normal;font-family:'Liberation Sans', sans-serif;transform:scaleX(0.8695);transform-origin:0 0;">Select</div>
<div class="t" style="left:237.5px;top:3.7px;font-size:12px;line-height:12px;color:#e6e6e6;font-weight:normal;font-family:'Liberation Sans', sans-serif;transform:scaleX(0.8813);transform-origin:0 0;">Filter</div>
<div class="t" style="left:271.7px;top:3.7px;font-size:12px;line-height:12px;color:#e6e6e6;font-weight:normal;font-family:'Liberation Sans', sans-serif;transform:scaleX(0.8917);transform-origin:0 0;">View</div>
<div class="t" style="left:305.5px;top:3.7px;font-size:12px;line-height:12px;color:#e6e6e6;font-weight:normal;font-family:'Liberation Sans', sans-serif;transform:scaleX(0.8715);transform-origin:0 0;">Plugins</div>
<div class="t" style="left:350.4px;top:3.7px;font-size:12px;line-height:12px;color:#e6e6e6;font-weight:normal;font-family:'Liberation Sans', sans-serif;transform:scaleX(0.9279);transform-origin:0 0;">Window</div>
<div class="t" style="left:401.5px;top:3.7px;font-size:12px;line-height:12px;color:#e6e6e6;font-weight:normal;font-family:'Liberation Sans', sans-serif;transform:scaleX(0.8955);transform-origin:0 0;">Help</div>
<div class="a " style="left:1651px;top:9px;width:9px;height:3px;background:#ccc"></div>
<svg class="a" style="left:1674px;top:3px;" width="13" height="11" viewBox="0 0 13 11"><rect x="1" y="4" width="7" height="6" fill="none" stroke="#ccc" stroke-width="1.3"/><path d="M4 4V1H11V7H8" fill="none" stroke="#ccc" stroke-width="1.3"/></svg>
<svg class="a" style="left:1709px;top:2px;" width="11" height="11" viewBox="0 0 11 11"><path d="M1 1L10 10M10 1L1 10" stroke="#ddd" stroke-width="1.6"/></svg>
<svg class="a" style="left:17px;top:28px;" width="17" height="16" viewBox="0 0 17 16"><path d="M8.5 1L16 8H13.5V15H10V10.5H7V15H3.5V8H1Z" fill="#b8b8b8"/></svg>
<div class="a " style="left:48px;top:27px;width:1px;height:20px;background:#444"></div>
<svg class="a" style="left:58px;top:28px;" width="12" height="17" viewBox="0 0 12 17"><path d="M1 1V13L4 10L6.5 15.5L8.5 14.5L6 9.5H10Z" fill="#111" stroke="#ddd" stroke-width="1"/></svg>
<svg class="a" style="left:78px;top:34px;" width="9" height="6" viewBox="0 0 9 6"><path d="M1 1L4.5 4.5L8 1" fill="none" stroke="#ccc" stroke-width="1.3"/></svg>
<div class="a " style="left:92px;top:27px;width:1px;height:20px;background:#444"></div>
<div class="t" style="left:102.0px;top:30.7px;font-size:11px;line-height:11px;color:#888;font-weight:normal;font-family:'Liberation Sans', sans-serif;transform:scaleX(0.7732);transform-origin:0 0;">Select:</div>
<div class="a " style="left:132px;top:29px;width:92px;height:13px;background:#4a4a4a;border:1px solid #505050"></div>
<div class="t" style="left:139.0px;top:30.2px;font-size:11px;line-height:11px;color:#888;font-weight:normal;font-family:'Liberation Sans', sans-serif;transform:scaleX(0.7876);transform-origin:0 0;">Active Layers</div>
<svg class="a" style="left:213px;top:33px;" width="8" height="6" viewBox="0 0 8 6"><path d="M1 1L4 4L7 1" fill="none" stroke="#777" stroke-width="1.1"/></svg>
<div class="a " style="left:232px;top:27px;width:1px;height:20px;background:#444"></div>
<div class="t" style="left:243.0px;top:31.7px;font-size:11px;line-height:11px;color:#ddd;font-weight:normal;font-family:'Liberation Sans', sans-serif;transform:scaleX(0.7599);transform-origin:0 0;">Fill:</div>
<div class="a " style="left:263px;top:30px;width:23px;height:14px;background:#fff;border:1px solid #888"></div>
<svg class="a" style="left:263px;top:30px;" width="23" height="14" viewBox="0 0 23 14"><path d="M5 12L18 2" stroke="#b0303a" stroke-width="1.8"/></svg>
<div class="t" style="left:292.5px;top:31.7px;font-size:11px;line-height:11px;color:#ddd;font-weight:normal;font-family:'Liberation Sans', sans-serif;transform:scaleX(0.8035);transform-origin:0 0;">Stroke:</div>
<div class="a " style="left:328px;top:30px;width:22px;height:13px;background:#fff;border:1px solid #888"></div>
<svg class="a" style="left:328px;top:30px;" width="22" height="13" viewBox="0 0 22 13"><rect x="4" y="4.5" width="14" height="4" fill="#333"/><path d="M5 11L9 9M13 4L17 2" stroke="#b0303a" stroke-width="1.3"/></svg>
<div class="a " style="left:357px;top:29px;width:55px;height:15px;background:#474747;border:1px solid #4e4e4e;border-radius:2px"></div>
<div class="a " style="left:398px;top:29px;width:1px;height:15px;background:#3d3d3d"></div>
<div class="t" style="left:361.0px;top:31.7px;font-size:11px;line-height:11px;color:#777;font-weight:normal;font-family:'Liberation Sans', sans-serif;transform:scaleX(0.8177);transform-origin:0 0;">1 px</div>
<svg class="a" style="left:401px;top:33px;" width="9" height="6" viewBox="0 0 9 6"><path d="M1 1L4.5 4.5L8 1" fill="none" stroke="#ccc" stroke-width="1.2"/></svg>
<div class="a " style="left:419px;top:29px;width:42px;height:15px;background:#474747;border:1px solid #4e4e4e;border-radius:2px"></div>
<div class="a " style="left:422px;top:35.5px;width:23px;height:2.0px;background:#eee"></div>
<svg class="a" style="left:449px;top:33px;" width="9" height="6" viewBox="0 0 9 6"><path d="M1 1L4.5 4.5L8 1" fill="none" stroke="#ccc" stroke-width="1.2"/></svg>
<div class="a " style="left:466px;top:27px;width:1px;height:20px;background:#444"></div>
<div class="t" style="left:470.0px;top:31.7px;font-size:11px;line-height:11px;color:#777;font-weight:normal;font-family:'Liberation Sans', sans-serif;transform:scaleX(0.8308);transform-origin:0 0;">W:</div>
<div class="a " style="left:486px;top:29px;width:38px;height:15px;background:#474747;border:1px solid #4e4e4e"></div>
<div class="t" style="left:489.0px;top:31.9px;font-size:10.5px;line-height:10.5px;color:#777;font-weight:normal;font-family:'Liberation Sans', sans-serif;transform:scaleX(0.8833);transform-origin:0 0;">2820 px</div>
<svg class="a" style="left:532px;top:31px;" width="15" height="10" viewBox="0 0 15 10"><path d="M6 2H4A3 3 0 0 0 4 8H6M9 2H11A3 3 0 0 1 11 8H9M5 5H10" fill="none" stroke="#ccc" stroke-width="1.4"/></svg>
<div class="t" style="left:557.0px;top:31.7px;font-size:11px;line-height:11px;color:#777;font-weight:normal;font-family:'Liberation Sans', sans-serif;transform:scaleX(0.8182);transform-origin:0 0;">H:</div>
<div class="a " style="left:573px;top:29px;width:37px;height:15px;background:#474747;border:1px solid #4e4e4e"></div>
<div class="t" style="left:576.0px;top:31.9px;font-size:10.5px;line-height:10.5px;color:#777;font-weight:normal;font-family:'Liberation Sans', sans-serif;transform:scaleX(0.8833);transform-origin:0 0;">2820 px</div>
<div class="a " style="left:623px;top:27px;width:1px;height:20px;background:#444"></div>
<div class="a " style="left:638px;top:32px;width:10px;height:10px;background:#ddd"></div>
<div class="a " style="left:648px;top:43px;width:2px;height:1px;background:#ccc"></div>
<div class="a " style="left:662px;top:27px;width:1px;height:20px;background:#444"></div>
<svg class="a" style="left:675px;top:29px;" width="16" height="16" viewBox="0 0 16 16"><path d="M2 1V15" stroke="#ccc" stroke-width="1.5"/><rect x="4" y="4" width="6" height="3" fill="#ccc"/><rect x="4" y="9" width="10" height="3" fill="#ccc"/></svg>
<div class="a " style="left:701px;top:27px;width:1px;height:20px;background:#444"></div>
<svg class="a" style="left:711px;top:28px;" width="20" height="17" viewBox="0 0 20 17"><path d="M3 9V5M1.5 6.5L3 5L4.5 6.5" stroke="#ccc" stroke-width="1.2" fill="none"/><path d="M7 5L12 2.5L17 5L12 7.5Z" fill="#ccc"/><path d="M7 8L12 10.5L17 8M7 11L12 13.5L17 11" fill="none" stroke="#ccc" stroke-width="1.3"/></svg>
<div class="a " style="left:740px;top:27px;width:1px;height:20px;background:#444"></div>
<div class="a " style="left:748px;top:31px;width:10px;height:10px;background:#e8e8e8;border-radius:2px"></div>
<svg class="a" style="left:748px;top:31px;" width="10" height="10" viewBox="0 0 10 10"><path d="M2.2 5.2L4.2 7.2L8.0 3.0" fill="none" stroke="#333" stroke-width="1.8"/></svg>
<div class="t" style="left:762.0px;top:31.2px;font-size:11px;line-height:11px;color:#ddd;font-weight:normal;font-family:'Liberation Sans', sans-serif;transform:scaleX(0.8006);transform-origin:0 0;">Align Edges</div>
<div class="a " style="left:821px;top:27px;width:1px;height:20px;background:#444"></div>
<svg class="a" style="left:833px;top:29px;" width="15" height="15" viewBox="0 0 15 15"><circle cx="7.5" cy="7.5" r="4" fill="none" stroke="#ddd" stroke-width="3"/><path d="M7.5 0.5V3M7.5 12V14.5M0.5 7.5H3M12 7.5H14.5M2.5 2.5L4.3 4.3M10.7 10.7L12.5 12.5M2.5 12.5L4.3 10.7M10.7 4.3L12.5 2.5" stroke="#ddd" stroke-width="2"/></svg>
<div class="a " style="left:860px;top:31px;width:10px;height:10px;border:1px solid #888;border-radius:2px"></div>
<div class="t" style="left:874.0px;top:31.2px;font-size:11px;line-height:11px;color:#ddd;font-weight:normal;font-family:'Liberation Sans', sans-serif;transform:scaleX(0.8219);transform-origin:0 0;">Constrain Path Dragging</div>
<svg class="a" style="left:1617px;top:28px;" width="15" height="16" viewBox="0 0 15 16"><path d="M7.5 1.5C4.5 1.5 3.5 4 3.5 6.5V10L1.5 13H13.5L11.5 10V6.5C11.5 4 10.5 1.5 7.5 1.5Z" fill="#c8c8c8"/><circle cx="7.5" cy="14.3" r="1.5" fill="#c8c8c8"/></svg>
<svg class="a" style="left:1647px;top:29px;" width="15" height="15" viewBox="0 0 15 15"><circle cx="6" cy="6" r="4.8" fill="none" stroke="#ddd" stroke-width="1.6"/><path d="M9.5 9.5L13.5 13.5" stroke="#ddd" stroke-width="1.8"/></svg>
<svg class="a" style="left:1675px;top:28px;" width="17" height="17" viewBox="0 0 17 17"><path d="M8.5 5.5A3.5 3.5 0 0 0 5.5 11V13H11.5V11A3.5 3.5 0 0 0 8.5 5.5Z" fill="none" stroke="#ddd" stroke-width="1.4"/><rect x="6" y="14" width="5" height="2" fill="#ddd"/><path d="M8.5 1V3M2 7H4M13 7H15M3.5 3L5 4.5M13.5 3L12 4.5" stroke="#ddd" stroke-width="1.3"/></svg>
<svg class="a" style="left:1703px;top:31px;" width="16" height="13" viewBox="0 0 16 13"><rect x="1" y="1" width="14" height="11" fill="none" stroke="#bbb" stroke-width="1.3"/><path d="M4 3V10" stroke="#999" stroke-width="1.3" stroke-dasharray="1 1"/></svg>
<svg class="a" style="left:1727px;top:34px;" width="8" height="5" viewBox="0 0 8 5"><path d="M1 1L4 4L7 1" fill="none" stroke="#666" stroke-width="1"/></svg>
<div class="t" style="left:47.5px;top:60.0px;font-size:11.5px;line-height:11.5px;color:#aaa;font-weight:bold;font-family:'Liberation Sans', sans-serif;transform:scaleX(0.8737);transform-origin:0 0;">Untitled-1 @ 50% (RGB/8)</div>
<svg class="a" style="left:176px;top:61px;" width="9" height="9" viewBox="0 0 9 9"><path d="M1 1L8 8M8 1L1 8" stroke="#aaa" stroke-width="1.1"/></svg>
<div class="a" style="left:193px;top:53px;width:133px;height:26px;overflow:hidden">
<div class="t" style="left:9.8px;top:7.0px;font-size:11.5px;line-height:11.5px;color:#e8e8e8;font-weight:bold;font-family:'Liberation Sans', sans-serif;transform:scaleX(0.8500);transform-origin:0 0;">Untitled-2 @ 14.7% (Ellipse 1 copy 2, RGB/8) *</div>
</div>
<div class="a " style="left:38px;top:79px;width:15px;height:15px;background:#575757"></div>
<svg class="a" style="left:4px;top:54px;" width="12" height="8" viewBox="0 0 12 8"><path d="M1 1L4 4L1 7M6 1L9 4L6 7" fill="none" stroke="#ddd" stroke-width="1.3"/></svg>
<div class="a " style="left:8px;top:64px;width:19px;height:2px;background:#4a4a4a"></div>
<svg class="a" style="left:8px;top:81px;" width="18" height="18" viewBox="0 0 18 18"><path d="M9 1V17M1 9H17" stroke="#d6d6d6" stroke-width="1.6"/><path d="M9 0L6 3.5H12ZM9 18L6 14.5H12ZM0 9L3.5 6V12ZM18 9L14.5 6V12Z" fill="#d6d6d6"/></svg>
<svg class="a" style="left:27px;top:96px;" width="4" height="4" viewBox="0 0 4 4"><path d="M4 0V4H0Z" fill="#bbb"/></svg>
<svg class="a" style="left:8px;top:104px;" width="18" height="18" viewBox="0 0 18 18"><rect x="2" y="3" width="14" height="12" fill="none" stroke="#d6d6d6" stroke-width="1.6" stroke-dasharray="3 2"/></svg>
<svg class="a" style="left:27px;top:120px;" width="4" height="4" viewBox="0 0 4 4"><path d="M4 0V4H0Z" fill="#bbb"/></svg>
<svg class="a" style="left:8px;top:128px;" width="18" height="18" viewBox="0 0 18 18"><circle cx="7" cy="11" r="5.5" fill="none" stroke="#d6d6d6" stroke-width="1.5" stroke-dasharray="2 1.5"/><path d="M16 1L8 11" stroke="#d6d6d6" stroke-width="2.2"/><circle cx="7.5" cy="11.5" r="2" fill="#d6d6d6"/></svg>
<svg class="a" style="left:27px;top:143px;" width="4" height="4" viewBox="0 0 4 4"><path d="M4 0V4H0Z" fill="#bbb"/></svg>
<svg class="a" style="left:8px;top:152px;" width="18" height="18" viewBox="0 0 18 18"><rect x="2" y="2" width="10" height="10" fill="none" stroke="#d6d6d6" stroke-width="1.3" stroke-dasharray="2 1.3"/><rect x="4.5" y="4.5" width="5" height="5" fill="#d6d6d6"/><path d="M9 9L17 13L13 14L11 18Z" fill="#d6d6d6"/></svg>
<svg class="a" style="left:27px;top:166px;" width="4" height="4" viewBox="0 0 4 4"><path d="M4 0V4H0Z" fill="#bbb"/></svg>
<svg class="a" style="left:8px;top:175px;" width="18" height="18" viewBox="0 0 18 18"><path d="M4 0V13H17M0 4H13V17" fill="none" stroke="#d6d6d6" stroke-width="2"/></svg>
<svg class="a" style="left:27px;top:190px;" width="4" height="4" viewBox="0 0 4 4"><path d="M4 0V4H0Z" fill="#bbb"/></svg>
<svg class="a" style="left:8px;top:198px;" width="18" height="18" viewBox="0 0 18 18"><rect x="2" y="2" width="14" height="14" fill="none" stroke="#d6d6d6" stroke-width="1.5"/><path d="M2 2L16 16M16 2L2 16" stroke="#d6d6d6" stroke-width="1.3"/></svg>
<svg class="a" style="left:8px;top:222px;" width="18" height="18" viewBox="0 0 18 18"><path d="M3 15L11 7L13 9L5 17H3Z" fill="none" stroke="#d6d6d6" stroke-width="1.4"/><path d="M10 4L12 2A2 2 0 0 1 16 6L14 8Z" fill="#d6d6d6"/></svg>
<svg class="a" style="left:27px;top:237px;" width="4" height="4" viewBox="0 0 4 4"><path d="M4 0V4H0Z" fill="#bbb"/></svg>
<svg class="a" style="left:8px;top:246px;" width="18" height="18" viewBox="0 0 18 18"><rect x="5" y="1" width="7" height="16" rx="3.5" fill="#d6d6d6" transform="rotate(45 9 9)"/><circle cx="9" cy="9" r="1" fill="#535353"/><path d="M2 6A7 7 0 0 1 6 2" stroke="#d6d6d6" stroke-width="1.3" stroke-dasharray="1.5 1" fill="none"/></svg>
<svg class="a" style="left:27px;top:260px;" width="4" height="4" viewBox="0 0 4 4"><path d="M4 0V4H0Z" fill="#bbb"/></svg>
<svg class="a" style="left:8px;top:269px;" width="18" height="18" viewBox="0 0 18 18"><path d="M16 1L8 10" stroke="#d6d6d6" stroke-width="2"/><path d="M3 12C5 9 8 10 8 12C8 15 4 16 1 16C3 15 2 13 3 12Z" fill="#d6d6d6"/></svg>
<svg class="a" style="left:27px;top:284px;" width="4" height="4" viewBox="0 0 4 4"><path d="M4 0V4H0Z" fill="#bbb"/></svg>
<svg class="a" style="left:8px;top:292px;" width="18" height="18" viewBox="0 0 18 18"><circle cx="9" cy="5" r="3" fill="#d6d6d6"/><rect x="7.5" y="7" width="3" height="4" fill="#d6d6d6"/><rect x="3" y="11" width="12" height="3" fill="#d6d6d6"/><rect x="2" y="15" width="14" height="2" fill="#d6d6d6"/></svg>
<svg class="a" style="left:27px;top:308px;" width="4" height="4" viewBox="0 0 4 4"><path d="M4 0V4H0Z" fill="#bbb"/></svg>
<svg class="a" style="left:8px;top:316px;" width="18" height="18" viewBox="0 0 18 18"><path d="M16 1L9 9" stroke="#d6d6d6" stroke-width="2"/><path d="M3 11C5 8 8 9 8 11C8 14 4 15 1 15C3 14 2 12 3 11Z" fill="#d6d6d6"/><path d="M3 7A6 6 0 0 1 8 2" stroke="#d6d6d6" stroke-width="1.4" fill="none"/></svg>
<svg class="a" style="left:27px;top:331px;" width="4" height="4" viewBox="0 0 4 4"><path d="M4 0V4H0Z" fill="#bbb"/></svg>
<svg class="a" style="left:8px;top:340px;" width="18" height="18" viewBox="0 0 18 18"><path d="M6 15L1 10L10 1L15 6L8 13" fill="none" stroke="#d6d6d6" stroke-width="1.6"/><path d="M1 10L5 14L8 11L4 7Z" fill="#d6d6d6"/><path d="M6 16H16" stroke="#d6d6d6" stroke-width="1.4"/></svg>
<svg class="a" style="left:27px;top:354px;" width="4" height="4" viewBox="0 0 4 4"><path d="M4 0V4H0Z" fill="#bbb"/></svg>
<svg class="a" style="left:8px;top:363px;" width="18" height="18" viewBox="0 0 18 18"><defs><linearGradient id="gg" x1="0" y1="0" x2="1" y2="1"><stop offset="0" stop-color="#333"/><stop offset="1" stop-color="#eee"/></linearGradient></defs><rect x="2" y="2" width="14" height="14" fill="url(#gg)" stroke="#d6d6d6" stroke-width="1.4"/></svg>
<svg class="a" style="left:27px;top:378px;" width="4" height="4" viewBox="0 0 4 4"><path d="M4 0V4H0Z" fill="#bbb"/></svg>
<svg class="a" style="left:8px;top:386px;" width="18" height="18" viewBox="0 0 18 18"><path d="M9 1C9 1 3 9 3 12A6 6 0 0 0 15 12C15 9 9 1 9 1Z" fill="#d6d6d6"/></svg>
<svg class="a" style="left:8px;top:410px;" width="18" height="18" viewBox="0 0 18 18"><path d="M12 2L5 11" stroke="#d6d6d6" stroke-width="2"/><circle cx="5" cy="13" r="3.5" fill="#d6d6d6"/><circle cx="13" cy="14" r="3" fill="none" stroke="#d6d6d6" stroke-width="1.5"/></svg>
<svg class="a" style="left:27px;top:425px;" width="4" height="4" viewBox="0 0 4 4"><path d="M4 0V4H0Z" fill="#bbb"/></svg>
<svg class="a" style="left:8px;top:434px;" width="18" height="18" viewBox="0 0 18 18"><circle cx="11" cy="7" r="5.5" fill="#d6d6d6"/><path d="M7 11L1 17" stroke="#d6d6d6" stroke-width="2.2"/></svg>
<svg class="a" style="left:27px;top:448px;" width="4" height="4" viewBox="0 0 4 4"><path d="M4 0V4H0Z" fill="#bbb"/></svg>
<svg class="a" style="left:8px;top:457px;" width="18" height="18" viewBox="0 0 18 18"><path d="M2 16L5 8L11 3L15 7L10 13Z" fill="none" stroke="#d6d6d6" stroke-width="1.6"/><path d="M2 16L7 11" stroke="#d6d6d6" stroke-width="1.3"/><circle cx="7.5" cy="10.5" r="1.5" fill="#d6d6d6"/></svg>
<svg class="a" style="left:27px;top:472px;" width="4" height="4" viewBox="0 0 4 4"><path d="M4 0V4H0Z" fill="#bbb"/></svg>
<svg class="a" style="left:8px;top:480px;" width="18" height="18" viewBox="0 0 18 18"><path d="M2 2H16V6M2 2V6M9 2V16M6 16H12" fill="none" stroke="#d6d6d6" stroke-width="2"/></svg>
<div class="a " style="left:3px;top:501px;width:28px;height:24px;background:#383838;border-radius:1px"></div>
<svg class="a" style="left:8px;top:504px;" width="18" height="18" viewBox="0 0 18 18"><path d="M4 1V15L7.5 11.5L10 17L12 16L9.5 10.5H14Z" fill="none" stroke="#d6d6d6" stroke-width="1.4"/></svg>
<svg class="a" style="left:27px;top:519px;" width="4" height="4" viewBox="0 0 4 4"><path d="M4 0V4H0Z" fill="#bbb"/></svg>
<svg class="a" style="left:8px;top:528px;" width="18" height="18" viewBox="0 0 18 18"><ellipse cx="9" cy="9" rx="7.5" ry="6.5" fill="#777" stroke="#d6d6d6" stroke-width="1.4"/></svg>
<svg class="a" style="left:27px;top:542px;" width="4" height="4" viewBox="0 0 4 4"><path d="M4 0V4H0Z" fill="#bbb"/></svg>
<svg class="a" style="left:8px;top:551px;" width="18" height="18" viewBox="0 0 18 18"><path d="M4 10V5A1.2 1.2 0 0 1 6.5 5V9V3A1.2 1.2 0 0 1 9 3V9V4A1.2 1.2 0 0 1 11.5 4V9V6A1.2 1.2 0 0 1 14 6V12C14 15 12 17 9 17C6 17 5 15 3 12L1.5 9.5A1.2 1.2 0 0 1 4 8Z" fill="#d6d6d6"/></svg>
<svg class="a" style="left:27px;top:566px;" width="4" height="4" viewBox="0 0 4 4"><path d="M4 0V4H0Z" fill="#bbb"/></svg>
<svg class="a" style="left:8px;top:574px;" width="18" height="18" viewBox="0 0 18 18"><circle cx="7" cy="7" r="5.5" fill="none" stroke="#d6d6d6" stroke-width="1.8"/><path d="M11 11L16.5 16.5" stroke="#d6d6d6" stroke-width="2.2"/></svg>
<svg class="a" style="left:27px;top:590px;" width="4" height="4" viewBox="0 0 4 4"><path d="M4 0V4H0Z" fill="#bbb"/></svg>
<svg class="a" style="left:8px;top:598px;" width="18" height="18" viewBox="0 0 18 18"><circle cx="3" cy="9" r="1.8" fill="#d6d6d6"/><circle cx="9" cy="9" r="1.8" fill="#d6d6d6"/><circle cx="15" cy="9" r="1.8" fill="#d6d6d6"/></svg>
<svg class="a" style="left:27px;top:613px;" width="4" height="4" viewBox="0 0 4 4"><path d="M4 0V4H0Z" fill="#bbb"/></svg>
<svg class="a" style="left:3px;top:623px;" width="11" height="11" viewBox="0 0 11 11"><rect x="0.5" y="0.5" width="7" height="7" fill="#000" stroke="#ddd" stroke-width="1"/><rect x="3.5" y="3.5" width="7" height="7" fill="#000" stroke="#ddd" stroke-width="1"/></svg>
<svg class="a" style="left:20px;top:620px;" width="11" height="14" viewBox="0 0 11 14"><path d="M2 2H7A3 3 0 0 1 10 5V11M0.5 3.5L2.5 1.5L2.5 4.5ZM8 9.5L10 12L12 9.5" stroke="#ddd" stroke-width="1.5" fill="none"/></svg>
<div class="a " style="left:13px;top:648px;width:18px;height:18px;background:#fff;border:1px solid #ccc"></div>
<div class="a " style="left:4px;top:639px;width:18px;height:18px;background:#000;border:2px solid #ddd;border-radius:1px"></div>
<svg class="a" style="left:8px;top:674px;" width="18" height="14" viewBox="0 0 18 14"><rect x="1" y="1" width="16" height="12" fill="none" stroke="#d0d0d0" stroke-width="1.5"/><circle cx="9" cy="7" r="3.5" fill="none" stroke="#aaa" stroke-width="1.3" stroke-dasharray="1.5 1"/></svg>
<svg class="a" style="left:8px;top:698px;" width="18" height="14" viewBox="0 0 18 14"><rect x="5" y="1" width="11" height="8" fill="#535353" stroke="#d0d0d0" stroke-width="1.4"/><rect x="1" y="5" width="11" height="8" fill="#535353" stroke="#d0d0d0" stroke-width="1.4"/></svg>
<svg class="a" style="left:27px;top:709px;" width="4" height="4" viewBox="0 0 4 4"><path d="M4 0V4H0Z" fill="#bbb"/></svg>
<svg class="a" style="left:8px;top:724px;" width="20" height="18" viewBox="0 0 20 18"><path d="M7 6A4 4 0 1 0 3 11" fill="none" stroke="#aaa" stroke-width="1.3"/><circle cx="14" cy="5" r="4" fill="#5b7db8"/><rect x="9" y="10" width="10" height="7" fill="#777"/><text x="10" y="16" font-size="6" fill="#ccc" font-family="'Liberation Sans', sans-serif">Ps</text></svg>
<svg class="a" style="left:1465px;top:53px;" width="10" height="9" viewBox="0 0 10 9"><path d="M4 1L1 4.5L4 8M9 1L6 4.5L9 8" fill="none" stroke="#ddd" stroke-width="1.3"/></svg>
<svg class="a" style="left:1724px;top:53px;" width="10" height="9" viewBox="0 0 10 9"><path d="M1 1L4 4.5L1 8M6 1L9 4.5L6 8" fill="none" stroke="#ddd" stroke-width="1.3"/></svg>
<div class="a " style="left:1445px;top:63px;width:33px;height:63px;background:#535353"></div>
<div class="a " style="left:1445px;top:126px;width:33px;height:2px;background:#424242"></div>
<div class="a " style="left:1445px;top:128px;width:33px;height:60px;background:#535353"></div>
<div class="a " style="left:1445px;top:188px;width:33px;height:2px;background:#424242"></div>
<div class="a " style="left:1452px;top:66px;width:18px;height:2px;background:#4a4a4a"></div>
<div class="a " style="left:1452px;top:131px;width:18px;height:2px;background:#4a4a4a"></div>
<svg class="a" style="left:1452px;top:74px;" width="18" height="18" viewBox="0 0 18 18"><rect x="1.5" y="1" width="4" height="4" fill="none" stroke="#ccc" stroke-width="1.2"/><rect x="1.5" y="6.5" width="4" height="4" fill="none" stroke="#ccc" stroke-width="1.2"/><rect x="1.5" y="12" width="4" height="4" fill="#ccc"/><path d="M9 3.5L11 1.5V4M11 2C14 2.5 15.5 5.5 14.5 9C13.8 11.5 12 13 10 14" fill="none" stroke="#ccc" stroke-width="1.5"/></svg>
<svg class="a" style="left:1453px;top:101px;" width="17" height="16" viewBox="0 0 17 16"><path d="M1 1H16V11H7L3.5 15V11H1Z" fill="#d4d4d4"/></svg>
<svg class="a" style="left:1452px;top:137px;" width="18" height="17" viewBox="0 0 18 17"><text x="0" y="15" font-size="16" fill="#ccc" font-family="'Liberation Sans', sans-serif">A</text><path d="M15 2V16" stroke="#ccc" stroke-width="1.2"/></svg>
<svg class="a" style="left:1455px;top:163px;" width="12" height="17" viewBox="0 0 12 17"><path d="M5.5 1.5A3.5 3.5 0 0 0 5.5 8.5H7V1.5Z" fill="#ccc"/><path d="M7 1.5H11M7.5 1.5V16M10 1.5V16" stroke="#ccc" stroke-width="1.6"/></svg>
<div class="a " style="left:1481px;top:63px;width:257px;height:242px;background:#535353"></div>
<div class="a " style="left:1481px;top:63px;width:257px;height:25px;background:#434343"></div>
<div class="a " style="left:1481px;top:63px;width:38px;height:26px;background:#535353"></div>
<div class="t" style="left:1489.0px;top:70.3px;font-size:10.5px;line-height:10.5px;color:#ececec;font-weight:bold;font-family:'Liberation Sans', sans-serif;transform:scaleX(0.8390);transform-origin:0 0;">Color</div>
<div class="a " style="left:1573px;top:65px;width:1px;height:23px;background:#3c3c3c"></div>
<div class="t" style="left:1526.6px;top:70.3px;font-size:10.5px;line-height:10.5px;color:#b4b4b4;font-weight:bold;font-family:'Liberation Sans', sans-serif;transform:scaleX(0.8258);transform-origin:0 0;">Swatches</div>
<div class="a " style="left:1630px;top:65px;width:1px;height:23px;background:#3c3c3c"></div>
<div class="t" style="left:1582.4px;top:70.3px;font-size:10.5px;line-height:10.5px;color:#b4b4b4;font-weight:bold;font-family:'Liberation Sans', sans-serif;transform:scaleX(0.8366);transform-origin:0 0;">Gradients</div>
<div class="a " style="left:1682px;top:65px;width:1px;height:23px;background:#3c3c3c"></div>
<div class="t" style="left:1639.3px;top:70.3px;font-size:10.5px;line-height:10.5px;color:#b4b4b4;font-weight:bold;font-family:'Liberation Sans', sans-serif;transform:scaleX(0.8331);transform-origin:0 0;">Patterns</div>
<svg class="a" style="left:1721px;top:71px;" width="14" height="9" viewBox="0 0 14 9"><path d="M0 1H13M0 3.5H13M0 6H13M0 8.5H13" stroke="#bbb" stroke-width="1.2"/></svg>
<div class="a " style="left:1497px;top:107px;width:19px;height:18px;background:#fff;border:1px solid #999"></div>
<div class="a " style="left:1488px;top:97px;width:20px;height:20px;background:#000;border:2px solid #ccc"></div>
<div class="a " style="left:1490px;top:99px;width:16px;height:16px;background:#000"></div>
<div class="a" style="left:1521px;top:95px;width:170px;height:192px;background:linear-gradient(to bottom,rgba(0,0,0,0),#000),linear-gradient(to right,#fff,#f00)"></div>
<div class="a" style="left:1706px;top:95px;width:18px;height:192px;background:linear-gradient(to bottom,#f00 0%,#f0f 17%,#00f 33%,#0ff 50%,#0f0 67%,#ff0 83%,#f00 100%)"></div>
<svg class="a" style="left:1518px;top:279px;" width="10" height="10" viewBox="0 0 10 10"><path d="M2 1A6 6 0 0 1 8 7" fill="none" stroke="#fff" stroke-width="1.3"/></svg>
<svg class="a" style="left:1697px;top:280px;" width="9" height="10" viewBox="0 0 9 10"><path d="M1 1H5L8 5L5 9H1Z" fill="#e8e8e8"/></svg>
<div class="a " style="left:1481px;top:305px;width:257px;height:2px;background:#383838"></div>
<div class="a " style="left:1481px;top:307px;width:257px;height:315px;background:#535353"></div>
<div class="a " style="left:1481px;top:307px;width:257px;height:26px;background:#434343"></div>
<div class="a " style="left:1481px;top:307px;width:60px;height:27px;background:#535353"></div>
<div class="t" style="left:1489.0px;top:314.7px;font-size:10.5px;line-height:10.5px;color:#ececec;font-weight:bold;font-family:'Liberation Sans', sans-serif;transform:scaleX(0.8472);transform-origin:0 0;">Properties</div>
<div class="a " style="left:1609px;top:309px;width:1px;height:24px;background:#3c3c3c"></div>
<div class="t" style="left:1549.0px;top:314.7px;font-size:10.5px;line-height:10.5px;color:#b4b4b4;font-weight:bold;font-family:'Liberation Sans', sans-serif;transform:scaleX(0.8335);transform-origin:0 0;">Adjustments</div>
<div class="a " style="left:1661px;top:309px;width:1px;height:24px;background:#3c3c3c"></div>
<div class="t" style="left:1618.4px;top:314.7px;font-size:10.5px;line-height:10.5px;color:#b4b4b4;font-weight:bold;font-family:'Liberation Sans', sans-serif;transform:scaleX(0.8343);transform-origin:0 0;">Libraries</div>
<svg class="a" style="left:1721px;top:316px;" width="14" height="9" viewBox="0 0 14 9"><path d="M0 1H13M0 3.5H13M0 6H13M0 8.5H13" stroke="#bbb" stroke-width="1.2"/></svg>
<div class="a " style="left:1491px;top:339px;width:20px;height:19px;background:#383838"></div>
<svg class="a" style="left:1494px;top:341px;" width="14" height="15" viewBox="0 0 14 15"><rect x="2.5" y="2.5" width="9" height="10" fill="none" stroke="#ddd" stroke-width="1.2"/><circle cx="2.5" cy="2.5" r="1.5" fill="#ddd"/><circle cx="11.5" cy="2.5" r="1.5" fill="#ddd"/><circle cx="2.5" cy="12.5" r="1.5" fill="#ddd"/><circle cx="11.5" cy="12.5" r="1.5" fill="#ddd"/></svg>
<div class="a " style="left:1515px;top:343px;width:16px;height:13px;background:#e0e0e0"></div>
<div class="a " style="left:1519px;top:346px;width:8px;height:7px;background:#333;border-radius:50%"></div>
<div class="t" style="left:1537.8px;top:345.2px;font-size:10.5px;line-height:10.5px;color:#d8d8d8;font-weight:normal;font-family:'Liberation Sans', sans-serif;transform:scaleX(0.8382);transform-origin:0 0;">Shape Properties</div>
<div class="a " style="left:1481px;top:363px;width:239px;height:1px;background:#454545"></div>
<svg class="a" style="left:1486px;top:373px;" width="10" height="8" viewBox="0 0 10 8"><path d="M1 2L5 6L9 2" fill="none" stroke="#bbb" stroke-width="1.2"/></svg>
<div class="t" style="left:1502.0px;top:372.9px;font-size:10.5px;line-height:10.5px;color:#e0e0e0;font-weight:bold;font-family:'Liberation Sans', sans-serif;transform:scaleX(0.8959);transform-origin:0 0;">Transform</div>
<svg class="a" style="left:1642px;top:370px;" width="15" height="13" viewBox="0 0 15 13"><path d="M4 7A4.5 4.5 0 1 1 7.5 11.5" fill="none" stroke="#aaa" stroke-width="1.3"/><path d="M1.5 5L4 8L6.5 5" fill="none" stroke="#aaa" stroke-width="1.2"/><path d="M3 12H12" stroke="#aaa" stroke-width="1.2"/></svg>
<div class="a " style="left:1489px;top:400px;width:22px;height:22px;background:#3e3e3e"></div>
<svg class="a" style="left:1494px;top:404px;" width="12" height="14" viewBox="0 0 12 14"><rect x="3.5" y="1" width="5" height="6" rx="2.5" fill="none" stroke="#ddd" stroke-width="1.3"/><rect x="3.5" y="7" width="5" height="6" rx="2.5" fill="none" stroke="#ddd" stroke-width="1.3"/></svg>
<div class="t" style="left:1522.0px;top:394.7px;font-size:10px;line-height:10px;color:#999;font-weight:normal;font-family:'Liberation Sans', sans-serif;transform:scaleX(0.8475);transform-origin:0 0;">W</div>
<div class="a " style="left:1535px;top:391px;width:51px;height:16px;background:#424242;border:1px solid #4a4a4a"></div>
<div class="t" style="left:1538.0px;top:394.7px;font-size:10px;line-height:10px;color:#e0e0e0;font-weight:normal;font-family:'Liberation Sans', sans-serif;transform:scaleX(0.9555);transform-origin:0 0;">2820 px</div>
<div class="t" style="left:1596.0px;top:394.7px;font-size:10px;line-height:10px;color:#999;font-weight:normal;font-family:'Liberation Sans', sans-serif;transform:scaleX(1.1993);transform-origin:0 0;">X</div>
<div class="a " style="left:1605px;top:391px;width:51px;height:16px;background:#424242;border:1px solid #4a4a4a"></div>
<div class="t" style="left:1608.0px;top:394.7px;font-size:10px;line-height:10px;color:#e0e0e0;font-weight:normal;font-family:'Liberation Sans', sans-serif;transform:scaleX(0.9555);transform-origin:0 0;">1638 px</div>
<div class="t" style="left:1522.0px;top:417.2px;font-size:10px;line-height:10px;color:#999;font-weight:normal;font-family:'Liberation Sans', sans-serif;transform:scaleX(1.1077);transform-origin:0 0;">H</div>
<div class="a " style="left:1535px;top:414px;width:51px;height:16px;background:#424242;border:1px solid #4a4a4a"></div>
<div class="t" style="left:1538.0px;top:417.2px;font-size:10px;line-height:10px;color:#e0e0e0;font-weight:normal;font-family:'Liberation Sans', sans-serif;transform:scaleX(0.9555);transform-origin:0 0;">2820 px</div>
<div class="t" style="left:1596.0px;top:417.2px;font-size:10px;line-height:10px;color:#999;font-weight:normal;font-family:'Liberation Sans', sans-serif;transform:scaleX(1.1993);transform-origin:0 0;">Y</div>
<div class="a " style="left:1605px;top:414px;width:51px;height:16px;background:#424242;border:1px solid #4a4a4a"></div>
<div class="t" style="left:1608.0px;top:417.2px;font-size:10px;line-height:10px;color:#e0e0e0;font-weight:normal;font-family:'Liberation Sans', sans-serif;transform:scaleX(0.9555);transform-origin:0 0;">1638 px</div>
<svg class="a" style="left:1517px;top:442px;" width="14" height="10" viewBox="0 0 14 10"><path d="M1 9H13M1 9L10 1" fill="none" stroke="#bbb" stroke-width="1.2"/><path d="M7 4A5 5 0 0 1 8.5 9" fill="none" stroke="#bbb" stroke-width="1"/></svg>
<div class="a " style="left:1535px;top:441px;width:48px;height:15px;background:#424242;border:1px solid #4a4a4a"></div>
<div class="a " style="left:1569px;top:441px;width:1px;height:15px;background:#4a4a4a"></div>
<div class="t" style="left:1538.0px;top:443.7px;font-size:10px;line-height:10px;color:#e0e0e0;font-weight:normal;font-family:'Liberation Sans', sans-serif;transform:scaleX(0.9378);transform-origin:0 0;">0.00°</div>
<svg class="a" style="left:1572px;top:446px;" width="9" height="6" viewBox="0 0 9 6"><path d="M1 1L4.5 4.5L8 1" fill="none" stroke="#aaa" stroke-width="1.1"/></svg>
<svg class="a" style="left:1610px;top:441px;" width="19" height="14" viewBox="0 0 19 14"><path d="M1 2L6 7L1 12Z" fill="none" stroke="#ccc" stroke-width="1.1"/><path d="M9.5 1V13" stroke="#ccc" stroke-dasharray="1.5 1"/><path d="M18 2L13 7L18 12Z" fill="#ddd"/></svg>
<svg class="a" style="left:1637px;top:440px;" width="15" height="17" viewBox="0 0 15 17"><path d="M2 1H13L7.5 6Z" fill="none" stroke="#ccc" stroke-width="1.1"/><path d="M1 8.5H14" stroke="#ccc" stroke-dasharray="1.5 1"/><path d="M2 16H13L7.5 11Z" fill="#ddd"/></svg>
<div class="a " style="left:1481px;top:469px;width:239px;height:1px;background:#454545"></div>
<svg class="a" style="left:1486px;top:479px;" width="10" height="8" viewBox="0 0 10 8"><path d="M1 2L5 6L9 2" fill="none" stroke="#bbb" stroke-width="1.2"/></svg>
<div class="t" style="left:1502.0px;top:478.9px;font-size:10.5px;line-height:10.5px;color:#e0e0e0;font-weight:bold;font-family:'Liberation Sans', sans-serif;transform:scaleX(0.8652);transform-origin:0 0;">Appearance</div>
<div class="t" style="left:1516.0px;top:503.7px;font-size:10px;line-height:10px;color:#bbb;font-weight:normal;font-family:'Liberation Sans', sans-serif;transform:scaleX(0.9394);transform-origin:0 0;">Fill</div>
<div class="a " style="left:1536px;top:499px;width:24px;height:19px;background:#fff;border:1px solid #777"></div>
<svg class="a" style="left:1536px;top:499px;" width="24" height="19" viewBox="0 0 24 19"><path d="M5 15L19 4" stroke="#b0303a" stroke-width="1.6"/></svg>
<div class="t" style="left:1503.0px;top:529.2px;font-size:10px;line-height:10px;color:#bbb;font-weight:normal;font-family:'Liberation Sans', sans-serif;transform:scaleX(0.9343);transform-origin:0 0;">Stroke</div>
<div class="a " style="left:1536px;top:524px;width:24px;height:19px;background:#fff;border:1px solid #777"></div>
<svg class="a" style="left:1536px;top:524px;" width="24" height="19" viewBox="0 0 24 19"><rect x="5" y="7" width="14" height="5" fill="#333"/><path d="M6 15L10 13M14 6L18 4" stroke="#b0303a" stroke-width="1.3"/></svg>
<div class="a " style="left:1535px;top:552px;width:56px;height:15px;background:#424242;border:1px solid #4a4a4a"></div>
<div class="a " style="left:1576px;top:552px;width:1px;height:15px;background:#4a4a4a"></div>
<div class="t" style="left:1539.0px;top:554.7px;font-size:10px;line-height:10px;color:#e0e0e0;font-weight:normal;font-family:'Liberation Sans', sans-serif;transform:scaleX(0.8995);transform-origin:0 0;">1 px</div>
<svg class="a" style="left:1579px;top:556px;" width="9" height="6" viewBox="0 0 9 6"><path d="M1 1L4.5 4.5L8 1" fill="none" stroke="#aaa" stroke-width="1.1"/></svg>
<div class="a " style="left:1597px;top:552px;width:57px;height:15px;background:#424242;border:1px solid #4a4a4a"></div>
<div class="a " style="left:1600px;top:558px;width:36px;height:2px;background:#eee"></div>
<svg class="a" style="left:1641px;top:556px;" width="9" height="6" viewBox="0 0 9 6"><path d="M1 1L4.5 4.5L8 1" fill="none" stroke="#aaa" stroke-width="1.1"/></svg>
<div class="a " style="left:1535px;top:574px;width:35px;height:15px;background:#424242;border:1px solid #4a4a4a"></div>
<svg class="a" style="left:1558px;top:578px;" width="9" height="6" viewBox="0 0 9 6"><path d="M1 1L4.5 4.5L8 1" fill="none" stroke="#aaa" stroke-width="1.1"/></svg>
<div class="a " style="left:1579px;top:574px;width:35px;height:15px;background:#424242;border:1px solid #4a4a4a"></div>
<svg class="a" style="left:1602px;top:578px;" width="9" height="6" viewBox="0 0 9 6"><path d="M1 1L4.5 4.5L8 1" fill="none" stroke="#aaa" stroke-width="1.1"/></svg>
<div class="a " style="left:1621px;top:574px;width:35px;height:15px;background:#424242;border:1px solid #4a4a4a"></div>
<svg class="a" style="left:1644px;top:578px;" width="9" height="6" viewBox="0 0 9 6"><path d="M1 1L4.5 4.5L8 1" fill="none" stroke="#aaa" stroke-width="1.1"/></svg>
<svg class="a" style="left:1541px;top:575px;" width="14" height="13" viewBox="0 0 14 13"><rect x="2" y="2" width="10" height="9" fill="none" stroke="#eee" stroke-width="1.4"/><rect x="4.5" y="4.5" width="5" height="4" fill="#eee"/></svg>
<div class="a " style="left:1586px;top:576px;width:8px;height:10px;background:#ddd"></div>
<div class="a " style="left:1629px;top:576px;width:12px;height:12px;background:#ddd"></div>
<div class="a " style="left:1634px;top:580px;width:7px;height:8px;background:#424242"></div>
<div class="a " style="left:1724px;top:367px;width:14px;height:233px;background:#4a4a4a"></div>
<div class="a " style="left:1726px;top:382px;width:10px;height:202px;background:#5e5e5e"></div>
<svg class="a" style="left:1727px;top:370px;" width="8" height="5" viewBox="0 0 8 5"><path d="M1 4L4 1L7 4" fill="none" stroke="#888" stroke-width="1"/></svg>
<svg class="a" style="left:1727px;top:589px;" width="8" height="5" viewBox="0 0 8 5"><path d="M1 1L4 4L7 1" fill="none" stroke="#888" stroke-width="1"/></svg>
<div class="a " style="left:1481px;top:622px;width:257px;height:3px;background:#383838"></div>
<div class="a " style="left:1481px;top:625px;width:257px;height:317px;background:#535353"></div>
<div class="a " style="left:1481px;top:625px;width:257px;height:25px;background:#434343"></div>
<div class="a " style="left:1481px;top:625px;width:42px;height:26px;background:#535353"></div>
<div class="t" style="left:1489.0px;top:631.5px;font-size:10.5px;line-height:10.5px;color:#ececec;font-weight:bold;font-family:'Liberation Sans', sans-serif;transform:scaleX(0.7827);transform-origin:0 0;">Layers</div>
<div class="a " style="left:1575px;top:627px;width:1px;height:23px;background:#3c3c3c"></div>
<div class="t" style="left:1531.4px;top:631.5px;font-size:10.5px;line-height:10.5px;color:#b4b4b4;font-weight:bold;font-family:'Liberation Sans', sans-serif;transform:scaleX(0.8168);transform-origin:0 0;">Channels</div>
<div class="a " style="left:1616.5px;top:627px;width:1.0px;height:23px;background:#3c3c3c"></div>
<div class="t" style="left:1585.8px;top:631.5px;font-size:10.5px;line-height:10.5px;color:#b4b4b4;font-weight:bold;font-family:'Liberation Sans', sans-serif;transform:scaleX(0.8044);transform-origin:0 0;">Paths</div>
<svg class="a" style="left:1721px;top:633px;" width="14" height="9" viewBox="0 0 14 9"><path d="M0 1H13M0 3.5H13M0 6H13M0 8.5H13" stroke="#bbb" stroke-width="1.2"/></svg>
<div class="a " style="left:1485px;top:659px;width:77px;height:18px;background:#4b4b4b;border:1px solid #505050"></div>
<svg class="a" style="left:1490px;top:662px;" width="11" height="12" viewBox="0 0 11 12"><circle cx="4.5" cy="4.5" r="3.5" fill="none" stroke="#999" stroke-width="1.3"/><path d="M7 7L10 10.5" stroke="#999" stroke-width="1.5"/></svg>
<div class="t" style="left:1504.0px;top:663.2px;font-size:10px;line-height:10px;color:#888;font-weight:normal;font-family:'Liberation Sans', sans-serif;transform:scaleX(0.8994);transform-origin:0 0;">Kind</div>
<svg class="a" style="left:1550px;top:666px;" width="8" height="5" viewBox="0 0 8 5"><path d="M1 1L4 4L7 1" fill="none" stroke="#666" stroke-width="1"/></svg>
<svg class="a" style="left:1571px;top:661px;" width="14" height="12" viewBox="0 0 14 12"><rect x="1" y="1" width="12" height="10" fill="none" stroke="#aaa" stroke-width="1.1"/><path d="M3 9L6 5L8 7L10 5L12 9Z" fill="#aaa"/></svg>
<svg class="a" style="left:1594px;top:661px;" width="12" height="12" viewBox="0 0 12 12"><circle cx="6" cy="6" r="5" fill="none" stroke="#aaa" stroke-width="1.2"/><path d="M6 1A5 5 0 0 1 6 11Z" fill="#aaa"/></svg>
<svg class="a" style="left:1616px;top:661px;" width="13" height="12" viewBox="0 0 13 12"><path d="M1 1.5H12M6.5 1.5V11M4 11H9" stroke="#aaa" stroke-width="1.8"/></svg>
<svg class="a" style="left:1638px;top:661px;" width="13" height="13" viewBox="0 0 13 13"><rect x="2" y="2" width="9" height="9" fill="none" stroke="#aaa" stroke-width="1.1"/><rect x="0.5" y="0.5" width="3" height="3" fill="#aaa"/><rect x="9.5" y="0.5" width="3" height="3" fill="#aaa"/><rect x="0.5" y="9.5" width="3" height="3" fill="#aaa"/><rect x="9.5" y="9.5" width="3" height="3" fill="#aaa"/></svg>
<svg class="a" style="left:1660px;top:661px;" width="12" height="13" viewBox="0 0 12 13"><path d="M4 1H8L11 4V11H7" fill="none" stroke="#aaa" stroke-width="1.1"/><rect x="1" y="6" width="6" height="6" fill="#aaa"/></svg>
<div class="a " style="left:1683px;top:658px;width:8px;height:8px;background:#999;border-radius:50%"></div>
<div class="a " style="left:1481px;top:679px;width:257px;height:1px;background:#4a4a4a"></div>
<div class="a " style="left:1485px;top:684px;width:115px;height:19px;background:#4b4b4b;border:1px solid #505050"></div>
<div class="t" style="left:1491.0px;top:688.7px;font-size:10px;line-height:10px;color:#888;font-weight:normal;font-family:'Liberation Sans', sans-serif;transform:scaleX(0.8999);transform-origin:0 0;">Normal</div>
<svg class="a" style="left:1590px;top:691px;" width="8" height="5" viewBox="0 0 8 5"><path d="M1 1L4 4L7 1" fill="none" stroke="#666" stroke-width="1"/></svg>
<div class="t" style="left:1606.4px;top:687.7px;font-size:10px;line-height:10px;color:#888;font-weight:normal;font-family:'Liberation Sans', sans-serif;transform:scaleX(0.8888);transform-origin:0 0;">Opacity:</div>
<div class="a " style="left:1644px;top:684px;width:45px;height:17px;background:#474747;border:1px solid #505050"></div>
<div class="a " style="left:1677px;top:684px;width:1px;height:17px;background:#505050"></div>
<div class="t" style="left:1648.0px;top:687.7px;font-size:10px;line-height:10px;color:#777;font-weight:normal;font-family:'Liberation Sans', sans-serif;transform:scaleX(1.0166);transform-origin:0 0;">100%</div>
<svg class="a" style="left:1679px;top:690px;" width="8" height="5" viewBox="0 0 8 5"><path d="M1 1L4 4L7 1" fill="none" stroke="#666" stroke-width="1"/></svg>
<div class="a " style="left:1481px;top:705px;width:257px;height:1px;background:#4a4a4a"></div>
<div class="t" style="left:1486.0px;top:712.7px;font-size:10px;line-height:10px;color:#888;font-weight:normal;font-family:'Liberation Sans', sans-serif;transform:scaleX(0.8787);transform-origin:0 0;">Lock:</div>
<svg class="a" style="left:1515px;top:711px;" width="12" height="12" viewBox="0 0 12 12"><rect x="0.5" y="0.5" width="11" height="11" fill="none" stroke="#999"/><rect x="2" y="2" width="3" height="3" fill="#999"/><rect x="7" y="2" width="3" height="3" fill="#999"/><rect x="4.5" y="4.5" width="3" height="3" fill="#999"/><rect x="2" y="7" width="3" height="3" fill="#999"/><rect x="7" y="7" width="3" height="3" fill="#999"/></svg>
<svg class="a" style="left:1535px;top:710px;" width="13" height="14" viewBox="0 0 13 14"><path d="M12 1L5 9" stroke="#999" stroke-width="2"/><path d="M1 13C2 10 4 9 6 10C6 12 4 13 1 13Z" fill="#999"/></svg>
<svg class="a" style="left:1554px;top:710px;" width="14" height="14" viewBox="0 0 14 14"><path d="M7 1V13M1 7H13" stroke="#999" stroke-width="1.4"/><path d="M7 0L5 2.5H9ZM7 14L5 11.5H9ZM0 7L2.5 5V9ZM14 7L11.5 5V9Z" fill="#999"/></svg>
<svg class="a" style="left:1574px;top:710px;" width="14" height="14" viewBox="0 0 14 14"><path d="M3 0V11H14M0 3H11V14" fill="none" stroke="#999" stroke-width="1.3"/><path d="M3 11L11 3" stroke="#999" stroke-width="1"/></svg>
<svg class="a" style="left:1595px;top:710px;" width="12" height="14" viewBox="0 0 12 14"><path d="M3 6V4A3 3 0 0 1 9 4V6" fill="none" stroke="#999" stroke-width="1.6"/><rect x="1.5" y="6" width="9" height="7" fill="#999"/></svg>
<div class="t" style="left:1627.0px;top:712.7px;font-size:10px;line-height:10px;color:#888;font-weight:normal;font-family:'Liberation Sans', sans-serif;transform:scaleX(0.8359);transform-origin:0 0;">Fill:</div>
<div class="a " style="left:1645px;top:709px;width:44px;height:16px;background:#474747;border:1px solid #505050"></div>
<div class="a " style="left:1677px;top:709px;width:1px;height:16px;background:#505050"></div>
<div class="t" style="left:1648.0px;top:712.7px;font-size:10px;line-height:10px;color:#777;font-weight:normal;font-family:'Liberation Sans', sans-serif;transform:scaleX(1.0166);transform-origin:0 0;">100%</div>
<svg class="a" style="left:1679px;top:715px;" width="8" height="5" viewBox="0 0 8 5"><path d="M1 1L4 4L7 1" fill="none" stroke="#666" stroke-width="1"/></svg>
<div class="a " style="left:1481px;top:730px;width:257px;height:1px;background:#474747"></div>
<div class="a " style="left:1508px;top:731px;width:1px;height:179px;background:#474747"></div>
<svg class="a" style="left:1486px;top:746px;" width="16" height="10" viewBox="0 0 16 10"><path d="M1 5C3 1.5 5.5 1 8 1C10.5 1 13 1.5 15 5C13 8.5 10.5 9 8 9C5.5 9 3 8.5 1 5Z" fill="#e8e8e8"/><circle cx="8" cy="5" r="2.6" fill="#535353"/><circle cx="8" cy="5" r="1.2" fill="#e8e8e8"/></svg>
<div class="t" style="left:1519.2px;top:742.3px;font-size:19px;line-height:19px;color:#e0e0e0;font-weight:normal;font-family:'Liberation Serif', serif;">T</div>
<div class="t" style="left:1557.5px;top:745.9px;font-size:10.5px;line-height:10.5px;color:#e8e8e8;font-weight:normal;font-family:'Liberation Sans', sans-serif;transform:scaleX(0.8513);transform-origin:0 0;">By Benyapha yotyot</div>
<div class="a " style="left:1481px;top:768px;width:243px;height:1px;background:#474747"></div>
<div class="a " style="left:1509px;top:769px;width:206px;height:37px;background:#6a6a6a"></div>
<div class="a " style="left:1715px;top:769px;width:9px;height:37px;background:#5a5a5a"></div>
<svg class="a" style="left:1486px;top:783px;" width="16" height="10" viewBox="0 0 16 10"><path d="M1 5C3 1.5 5.5 1 8 1C10.5 1 13 1.5 15 5C13 8.5 10.5 9 8 9C5.5 9 3 8.5 1 5Z" fill="#e8e8e8"/><circle cx="8" cy="5" r="2.6" fill="#535353"/><circle cx="8" cy="5" r="1.2" fill="#e8e8e8"/></svg>
<div class="a " style="left:1511px;top:772px;width:31px;height:31px;background-color:#fff;background-image:linear-gradient(45deg,#ccc 25%,transparent 25%,transparent 75%,#ccc 75%),linear-gradient(45deg,#ccc 25%,transparent 25%,transparent 75%,#ccc 75%);background-size:8px 8px;background-position:0 0,4px 4px;border:2px solid #111;outline:1px solid #fff"></div>
<div class="a " style="left:1527px;top:788px;width:14px;height:14px;background:#3a3a3a;border:1px solid #111"></div>
<svg class="a" style="left:1528px;top:789px;" width="12" height="12" viewBox="0 0 12 12"><rect x="2.5" y="2.5" width="7" height="7" fill="none" stroke="#eee" stroke-width="1"/><circle cx="2.5" cy="2.5" r="1.3" fill="#eee"/><circle cx="9.5" cy="2.5" r="1.3" fill="#eee"/><circle cx="2.5" cy="9.5" r="1.3" fill="#eee"/><circle cx="9.5" cy="9.5" r="1.3" fill="#eee"/></svg>
<div class="t" style="left:1548.0px;top:783.4px;font-size:10.5px;line-height:10.5px;color:#f0f0f0;font-weight:normal;font-family:'Liberation Sans', sans-serif;transform:scaleX(0.8567);transform-origin:0 0;">Ellipse 1 copy 2</div>
<div class="t" style="left:1700.0px;top:782.2px;font-size:12px;line-height:12px;color:#e0e0e0;font-weight:normal;font-family:'Liberation Serif', serif;font-style:italic;">fx</div>
<svg class="a" style="left:1715px;top:785px;" width="9" height="6" viewBox="0 0 9 6"><path d="M1 5L4.5 1.5L8 5" fill="none" stroke="#ccc" stroke-width="1.1"/></svg>
<div class="t" style="left:1542.5px;top:807.9px;font-size:10.5px;line-height:10.5px;color:#e8e8e8;font-weight:normal;font-family:'Liberation Sans', sans-serif;transform:scaleX(0.8150);transform-origin:0 0;">Effects</div>
<svg class="a" style="left:1539px;top:826px;" width="16" height="10" viewBox="0 0 16 10"><path d="M1 5C3 1.5 5.5 1 8 1C10.5 1 13 1.5 15 5C13 8.5 10.5 9 8 9C5.5 9 3 8.5 1 5Z" fill="#aaa"/><circle cx="8" cy="5" r="2.6" fill="#535353"/><circle cx="8" cy="5" r="1.2" fill="#aaa"/></svg>
<div class="t" style="left:1557.5px;top:825.4px;font-size:10.5px;line-height:10.5px;color:#e8e8e8;font-weight:normal;font-family:'Liberation Sans', sans-serif;transform:scaleX(0.8403);transform-origin:0 0;">Stroke</div>
<div class="a " style="left:1481px;top:839px;width:243px;height:1px;background:#474747"></div>
<svg class="a" style="left:1486px;top:854px;" width="16" height="10" viewBox="0 0 16 10"><path d="M1 5C3 1.5 5.5 1 8 1C10.5 1 13 1.5 15 5C13 8.5 10.5 9 8 9C5.5 9 3 8.5 1 5Z" fill="#e8e8e8"/><circle cx="8" cy="5" r="2.6" fill="#535353"/><circle cx="8" cy="5" r="1.2" fill="#e8e8e8"/></svg>
<div class="a " style="left:1511px;top:845px;width:30px;height:29px;background-color:#fff;background-image:linear-gradient(45deg,#ccc 25%,transparent 25%,transparent 75%,#ccc 75%),linear-gradient(45deg,#ccc 25%,transparent 25%,transparent 75%,#ccc 75%);background-size:8px 8px;background-position:0 0,4px 4px;border:1px solid #222"></div>
<div class="a " style="left:1526px;top:859px;width:14px;height:14px;background:#3a3a3a;border:1px solid #111"></div>
<svg class="a" style="left:1527px;top:860px;" width="12" height="12" viewBox="0 0 12 12"><rect x="2.5" y="2.5" width="7" height="7" fill="none" stroke="#eee" stroke-width="1"/><circle cx="2.5" cy="2.5" r="1.3" fill="#eee"/><circle cx="9.5" cy="2.5" r="1.3" fill="#eee"/><circle cx="2.5" cy="9.5" r="1.3" fill="#eee"/><circle cx="9.5" cy="9.5" r="1.3" fill="#eee"/></svg>
<div class="t" style="left:1548.0px;top:854.9px;font-size:10.5px;line-height:10.5px;color:#e8e8e8;font-weight:normal;font-family:'Liberation Sans', sans-serif;transform:scaleX(0.8490);transform-origin:0 0;">Ellipse 1 copy</div>
<div class="a " style="left:1715px;top:840px;width:9px;height:37px;background:#4a4a4a"></div>
<div class="t" style="left:1700.0px;top:853.7px;font-size:12px;line-height:12px;color:#e0e0e0;font-weight:normal;font-family:'Liberation Serif', serif;font-style:italic;">fx</div>
<svg class="a" style="left:1715px;top:856px;" width="9" height="6" viewBox="0 0 9 6"><path d="M1 5L4.5 1.5L8 5" fill="none" stroke="#ccc" stroke-width="1.1"/></svg>
<div class="t" style="left:1542.5px;top:879.4px;font-size:10.5px;line-height:10.5px;color:#e8e8e8;font-weight:normal;font-family:'Liberation Sans', sans-serif;transform:scaleX(0.8150);transform-origin:0 0;">Effects</div>
<svg class="a" style="left:1539px;top:897px;" width="16" height="10" viewBox="0 0 16 10"><path d="M1 5C3 1.5 5.5 1 8 1C10.5 1 13 1.5 15 5C13 8.5 10.5 9 8 9C5.5 9 3 8.5 1 5Z" fill="#aaa"/><circle cx="8" cy="5" r="2.6" fill="#535353"/><circle cx="8" cy="5" r="1.2" fill="#aaa"/></svg>
<div class="t" style="left:1557.5px;top:896.9px;font-size:10.5px;line-height:10.5px;color:#e8e8e8;font-weight:normal;font-family:'Liberation Sans', sans-serif;transform:scaleX(0.8403);transform-origin:0 0;">Stroke</div>
<div class="a " style="left:1481px;top:910px;width:243px;height:1px;background:#474747"></div>
<div class="a " style="left:1511px;top:912px;width:30px;height:6px;background:#3a3a3a"></div>
<div class="a " style="left:1724px;top:731px;width:14px;height:187px;background:#4a4a4a"></div>
<div class="a " style="left:1726px;top:773px;width:10px;height:66px;background:#6a6a6a"></div>
<svg class="a" style="left:1727px;top:736px;" width="8" height="5" viewBox="0 0 8 5"><path d="M1 4L4 1L7 4" fill="none" stroke="#888" stroke-width="1"/></svg>
<svg class="a" style="left:1727px;top:908px;" width="8" height="5" viewBox="0 0 8 5"><path d="M1 1L4 4L7 1" fill="none" stroke="#888" stroke-width="1"/></svg>
<div class="a " style="left:1481px;top:918px;width:257px;height:24px;background:#535353"></div>
<div class="a " style="left:1481px;top:918px;width:257px;height:1px;background:#454545"></div>
<svg class="a" style="left:1553px;top:924px;" width="16" height="10" viewBox="0 0 16 10"><rect x="1" y="2" width="8" height="6" rx="3" fill="none" stroke="#aaa" stroke-width="1.3"/><rect x="7" y="2" width="8" height="6" rx="3" fill="none" stroke="#aaa" stroke-width="1.3"/></svg>
<div class="t" style="left:1580.0px;top:923.2px;font-size:13px;line-height:13px;color:#aaa;font-weight:normal;font-family:'Liberation Serif', serif;font-style:italic;">fx</div>
<svg class="a" style="left:1603px;top:923px;" width="14" height="12" viewBox="0 0 14 12"><rect x="0.5" y="0.5" width="13" height="11" fill="#aaa"/><circle cx="7" cy="6" r="3.5" fill="#535353"/></svg>
<svg class="a" style="left:1628px;top:923px;" width="13" height="13" viewBox="0 0 13 13"><circle cx="6.5" cy="6.5" r="5.5" fill="none" stroke="#aaa" stroke-width="1.3"/><path d="M2.5 10.5L10.5 2.5A5.5 5.5 0 0 1 2.5 10.5Z" fill="#aaa"/></svg>
<svg class="a" style="left:1651px;top:923px;" width="17" height="12" viewBox="0 0 17 12"><path d="M1 2H6L7.5 3.5H16V11H1Z" fill="#aaa"/></svg>
<svg class="a" style="left:1677px;top:922px;" width="14" height="14" viewBox="0 0 14 14"><rect x="1" y="1" width="12" height="12" fill="none" stroke="#aaa" stroke-width="1.3"/><path d="M7 4V10M4 7H10" stroke="#aaa" stroke-width="1.3"/></svg>
<svg class="a" style="left:1701px;top:921px;" width="13" height="15" viewBox="0 0 13 15"><path d="M1 3H12M5 3V1H8V3M2.5 3L3.5 14H9.5L10.5 3" fill="none" stroke="#aaa" stroke-width="1.3"/><path d="M5 5V12M8 5V12" stroke="#aaa" stroke-width="1"/></svg>
<div class="a" style="left:326px;top:62px;width:1087px;height:789px;box-shadow:0 3px 12px 2px rgba(0,0,0,.28)"></div>
<div class="a " style="left:326px;top:62px;width:1087px;height:28px;background:#fff"></div>
<div class="a " style="left:326px;top:90px;width:1087px;height:761px;background:#535353"></div>
<div class="t" style="left:333.5px;top:70.2px;font-size:12px;line-height:12px;color:#1a1a1a;font-weight:normal;font-family:'Liberation Sans', sans-serif;transform:scaleX(0.8568);transform-origin:0 0;">Export As</div>
<svg class="a" style="left:1393px;top:69px;" width="12" height="12" viewBox="0 0 12 12"><path d="M1 1L11 11M11 1L1 11" stroke="#222" stroke-width="1.3"/></svg>
<div class="a " style="left:334px;top:111px;width:274px;height:87px;border:1px solid #4a4a4a;border-radius:2px"></div>
<div class="a " style="left:343px;top:109px;width:54px;height:5px;background:#535353"></div>
<div class="t" style="left:348.0px;top:105.7px;font-size:13px;line-height:13px;color:#e3e3e3;font-weight:normal;font-family:'Liberation Sans', sans-serif;transform:scaleX(0.8825);transform-origin:0 0;">Scale All</div>
<div class="t" style="left:352.0px;top:130.7px;font-size:13px;line-height:13px;color:#e3e3e3;font-weight:normal;font-family:'Liberation Sans', sans-serif;transform:scaleX(0.8304);transform-origin:0 0;">Size:</div>
<div class="t" style="left:432.0px;top:130.7px;font-size:13px;line-height:13px;color:#e3e3e3;font-weight:normal;font-family:'Liberation Sans', sans-serif;transform:scaleX(0.8638);transform-origin:0 0;">Suffix:</div>
<svg class="a" style="left:565px;top:130px;" width="12" height="12" viewBox="0 0 12 12"><path d="M6 0V12M0 6H12" stroke="#bbb" stroke-width="1.4"/></svg>
<div class="a " style="left:353px;top:159px;width:71px;height:27px;background:#464646;border:1px solid #4c4c4c;border-radius:3px;"></div>
<div class="t" style="left:367.0px;top:166.2px;font-size:13px;line-height:13px;color:#e3e3e3;font-weight:normal;font-family:'Liberation Sans', sans-serif;transform:scaleX(0.8740);transform-origin:0 0;">1x</div>
<svg class="a" style="left:403px;top:168px;" width="10" height="8" viewBox="0 0 10 8"><path d="M1 2.4L5 6.4L9 2.4" fill="none" stroke="#ddd" stroke-width="1.6"/></svg>
<div class="a " style="left:433px;top:159px;width:112px;height:27px;background:#464646;border:1px solid #4c4c4c;border-radius:3px;"></div>
<svg class="a" style="left:563px;top:163px;" width="15" height="17" viewBox="0 0 15 17"><path d="M1 2.5H14M5.5 2.5V1H9.5V2.5" fill="none" stroke="#777" stroke-width="1"/><path d="M2 3.5L3 15.5H12L13 3.5Z" fill="none" stroke="#777" stroke-width="1.1"/><path d="M5.5 5V14M7.5 5V14M9.5 5V14" stroke="#777" stroke-width="1"/></svg>
<div class="a " style="left:334px;top:213px;width:274px;height:630px;border:1px solid #4a4a4a;border-radius:2px"></div>
<div class="a " style="left:343px;top:229px;width:14px;height:14px;background:#e8e8e8;border-radius:2px"></div>
<svg class="a" style="left:343px;top:229px;" width="14" height="14" viewBox="0 0 14 14"><path d="M3.1 7.3L5.9 10.1L11.2 4.2" fill="none" stroke="#333" stroke-width="1.8"/></svg>
<div class="t" style="left:365.0px;top:229.2px;font-size:13px;line-height:13px;color:#e3e3e3;font-weight:normal;font-family:'Liberation Sans', sans-serif;transform:scaleX(0.8977);transform-origin:0 0;">Select All</div>
<div class="a " style="left:335px;top:257px;width:272px;height:58px;background:#3c3c3c"></div>
<div class="a " style="left:343px;top:280px;width:14px;height:14px;background:#e8e8e8;border-radius:2px"></div>
<svg class="a" style="left:343px;top:280px;" width="14" height="14" viewBox="0 0 14 14"><path d="M3.1 7.3L5.9 10.1L11.2 4.2" fill="none" stroke="#333" stroke-width="1.8"/></svg>
<div class="a " style="left:369px;top:268px;width:36px;height:37px;background:#fff"></div>
<svg class="a" style="left:369px;top:268px;" width="36" height="37" viewBox="0 0 36 37"><circle cx="17.6" cy="18" r="10.5" fill="#e3b6e6"/><circle cx="16" cy="16" r="4.5" fill="#c8307a"/><circle cx="20" cy="20" r="3.5" fill="#e070c0"/><circle cx="17.6" cy="18" r="11.3" fill="none" stroke="#222" stroke-width="1.3" stroke-dasharray="2.2 1.3"/></svg>
<div class="t" style="left:416.0px;top:272.2px;font-size:13px;line-height:13px;color:#e3e3e3;font-weight:normal;font-family:'Liberation Sans', sans-serif;transform:scaleX(0.9167);transform-origin:0 0;">Untitled-2</div>
<div class="t" style="left:416.0px;top:290.7px;font-size:12px;line-height:12px;color:#e3e3e3;font-weight:normal;font-family:'Liberation Sans', sans-serif;transform:scaleX(0.7284);transform-origin:0 0;">JPG</div>
<div class="t" style="left:469.0px;top:290.7px;font-size:12px;line-height:12px;color:#e3e3e3;font-weight:normal;font-family:'Liberation Sans', sans-serif;transform:scaleX(0.9084);transform-origin:0 0;">6096 x 6096</div>
<div class="t" style="left:570.0px;top:290.7px;font-size:12px;line-height:12px;color:#e3e3e3;font-weight:normal;font-family:'Liberation Sans', sans-serif;transform:scaleX(0.8155);transform-origin:0 0;">1.4 MB</div>
<div class="t" style="left:623.5px;top:105.2px;font-size:13px;line-height:13px;color:#f0f0f0;font-weight:bold;font-family:'Liberation Sans', sans-serif;transform:scaleX(0.8343);transform-origin:0 0;">Preview</div>
<div class="a " style="left:623px;top:124px;width:42px;height:2px;background:#e8e8e8"></div>
<div class="t" style="left:686.0px;top:105.2px;font-size:13px;line-height:13px;color:#aaa;font-weight:normal;font-family:'Liberation Sans', sans-serif;transform:scaleX(0.8873);transform-origin:0 0;">2-Up</div>
<div class="a " style="left:616px;top:126px;width:507px;height:717px;background:#282828"></div>
<div class="a " style="left:662px;top:260px;width:414px;height:414px;background:#fff"></div>
<svg class="a" style="left:819px;top:819px;" width="15" height="15" viewBox="0 0 15 15"><circle cx="7.5" cy="7.5" r="7" fill="#bdbdbd"/><path d="M3.5 7.5H11.5" stroke="#282828" stroke-width="2"/></svg>
<div class="t" style="left:857.0px;top:820.7px;font-size:12px;line-height:12px;color:#e0e0e0;font-weight:normal;font-family:'Liberation Sans', sans-serif;transform:scaleX(0.8775);transform-origin:0 0;">7.5%</div>
<svg class="a" style="left:902px;top:819px;" width="15" height="15" viewBox="0 0 15 15"><circle cx="7.5" cy="7.5" r="7" fill="#bdbdbd"/><path d="M3.5 7.5H11.5M7.5 3.5V11.5" stroke="#282828" stroke-width="2"/></svg>
<div class="a " style="left:1131px;top:111px;width:274px;height:115px;border:1px solid #4a4a4a;border-radius:2px"></div>
<div class="a " style="left:1141px;top:109px;width:72px;height:5px;background:#535353"></div>
<div class="t" style="left:1146.0px;top:105.7px;font-size:13px;line-height:13px;color:#e3e3e3;font-weight:normal;font-family:'Liberation Sans', sans-serif;transform:scaleX(0.8668);transform-origin:0 0;">File Settings</div>
<div class="t" style="left:1163.0px;top:138.7px;font-size:13px;line-height:13px;color:#e3e3e3;font-weight:normal;font-family:'Liberation Sans', sans-serif;transform:scaleX(0.8933);transform-origin:0 0;">Format:</div>
<div class="a " style="left:1212px;top:132px;width:163px;height:26px;background:#464646;border:1px solid #4c4c4c;border-radius:3px;"></div>
<div class="t" style="left:1222.0px;top:138.7px;font-size:13px;line-height:13px;color:#e3e3e3;font-weight:normal;font-family:'Liberation Sans', sans-serif;transform:scaleX(0.7515);transform-origin:0 0;">JPG</div>
<svg class="a" style="left:1354px;top:141px;" width="10" height="8" viewBox="0 0 10 8"><path d="M1 2.4L5 6.4L9 2.4" fill="none" stroke="#ddd" stroke-width="1.6"/></svg>
<div class="t" style="left:1162.0px;top:174.7px;font-size:13px;line-height:13px;color:#e3e3e3;font-weight:normal;font-family:'Liberation Sans', sans-serif;transform:scaleX(0.9303);transform-origin:0 0;">Quality:</div>
<div class="t" style="left:1385.0px;top:175.2px;font-size:12px;line-height:12px;color:#e3e3e3;font-weight:normal;font-family:'Liberation Sans', sans-serif;">6</div>
<div class="t" style="left:1199.0px;top:199.7px;font-size:11px;line-height:11px;color:#e3e3e3;font-weight:normal;font-family:'Liberation Sans', sans-serif;transform:scaleX(0.7357);transform-origin:0 0;">Lo</div>
<div class="t" style="left:1378.6px;top:199.7px;font-size:11px;line-height:11px;color:#e3e3e3;font-weight:normal;font-family:'Liberation Sans', sans-serif;transform:scaleX(0.9400);transform-origin:0 0;">gh</div>
<div class="a " style="left:1131px;top:242px;width:274px;height:172px;border:1px solid #4a4a4a;border-radius:2px"></div>
<div class="a " style="left:1141px;top:240px;width:65px;height:5px;background:#535353"></div>
<div class="t" style="left:1146.0px;top:236.7px;font-size:13px;line-height:13px;color:#e3e3e3;font-weight:normal;font-family:'Liberation Sans', sans-serif;transform:scaleX(0.8458);transform-origin:0 0;">Image Size</div>
<div class="t" style="left:1169.8px;top:269.7px;font-size:13px;line-height:13px;color:#e3e3e3;font-weight:normal;font-family:'Liberation Sans', sans-serif;transform:scaleX(0.9000);transform-origin:0 0;">Width:</div>
<div class="a " style="left:1212px;top:263px;width:163px;height:26px;background:#464646;border:1px solid #4c4c4c;border-radius:3px;"></div>
<div class="t" style="left:1224.0px;top:270.0px;font-size:12.5px;line-height:12.5px;color:#e3e3e3;font-weight:normal;font-family:'Liberation Sans', sans-serif;transform:scaleX(0.9000);transform-origin:0 0;">6096</div>
<div class="t" style="left:1384.0px;top:269.7px;font-size:13px;line-height:13px;color:#e3e3e3;font-weight:normal;font-family:'Liberation Sans', sans-serif;transform:scaleX(0.9000);transform-origin:0 0;">px</div>
<div class="t" style="left:1165.9px;top:305.7px;font-size:13px;line-height:13px;color:#e3e3e3;font-weight:normal;font-family:'Liberation Sans', sans-serif;transform:scaleX(0.9000);transform-origin:0 0;">Height:</div>
<div class="a " style="left:1212px;top:299px;width:163px;height:26px;background:#464646;border:1px solid #4c4c4c;border-radius:3px;"></div>
<div class="t" style="left:1224.0px;top:306.0px;font-size:12.5px;line-height:12.5px;color:#e3e3e3;font-weight:normal;font-family:'Liberation Sans', sans-serif;transform:scaleX(0.9000);transform-origin:0 0;">6096</div>
<div class="t" style="left:1384.0px;top:305.7px;font-size:13px;line-height:13px;color:#e3e3e3;font-weight:normal;font-family:'Liberation Sans', sans-serif;transform:scaleX(0.9000);transform-origin:0 0;">px</div>
<div class="t" style="left:1170.5px;top:341.7px;font-size:13px;line-height:13px;color:#e3e3e3;font-weight:normal;font-family:'Liberation Sans', sans-serif;transform:scaleX(0.9000);transform-origin:0 0;">Scale:</div>
<div class="a " style="left:1212px;top:335px;width:163px;height:26px;background:#464646;border:1px solid #4c4c4c;border-radius:3px;"></div>
<div class="t" style="left:1222.0px;top:342.0px;font-size:12.5px;line-height:12.5px;color:#e3e3e3;font-weight:normal;font-family:'Liberation Sans', sans-serif;transform:scaleX(0.9000);transform-origin:0 0;">100%</div>
<svg class="a" style="left:1354px;top:344px;" width="10" height="8" viewBox="0 0 10 8"><path d="M1 2.4L5 6.4L9 2.4" fill="none" stroke="#ddd" stroke-width="1.6"/></svg>
<div class="t" style="left:1147.1px;top:378.7px;font-size:13px;line-height:13px;color:#e3e3e3;font-weight:normal;font-family:'Liberation Sans', sans-serif;transform:scaleX(0.9000);transform-origin:0 0;">Resample:</div>
<div class="a " style="left:1212px;top:372px;width:163px;height:26px;background:#464646;border:1px solid #4c4c4c;border-radius:3px;"></div>
<div class="t" style="left:1222.0px;top:379.0px;font-size:12.5px;line-height:12.5px;color:#e3e3e3;font-weight:normal;font-family:'Liberation Sans', sans-serif;transform:scaleX(0.9000);transform-origin:0 0;">Bicubic Automatic</div>
<svg class="a" style="left:1354px;top:381px;" width="10" height="8" viewBox="0 0 10 8"><path d="M1 2.4L5 6.4L9 2.4" fill="none" stroke="#ddd" stroke-width="1.6"/></svg>
<div class="a " style="left:1131px;top:428px;width:274px;height:121px;border:1px solid #4a4a4a;border-radius:2px"></div>
<div class="a " style="left:1141px;top:426px;width:70px;height:5px;background:#535353"></div>
<div class="t" style="left:1146.0px;top:422.7px;font-size:13px;line-height:13px;color:#e3e3e3;font-weight:normal;font-family:'Liberation Sans', sans-serif;transform:scaleX(0.8222);transform-origin:0 0;">Canvas Size</div>
<div class="t" style="left:1169.8px;top:455.7px;font-size:13px;line-height:13px;color:#e3e3e3;font-weight:normal;font-family:'Liberation Sans', sans-serif;transform:scaleX(0.9000);transform-origin:0 0;">Width:</div>
<div class="a " style="left:1212px;top:448.5px;width:163px;height:27.0px;background:#464646;border:1px solid #4c4c4c;border-radius:3px;"></div>
<div class="t" style="left:1224.0px;top:456.0px;font-size:12.5px;line-height:12.5px;color:#e3e3e3;font-weight:normal;font-family:'Liberation Sans', sans-serif;transform:scaleX(0.9000);transform-origin:0 0;">6096</div>
<div class="t" style="left:1384.0px;top:455.7px;font-size:13px;line-height:13px;color:#e3e3e3;font-weight:normal;font-family:'Liberation Sans', sans-serif;transform:scaleX(0.9000);transform-origin:0 0;">px</div>
<div class="t" style="left:1165.9px;top:492.2px;font-size:13px;line-height:13px;color:#e3e3e3;font-weight:normal;font-family:'Liberation Sans', sans-serif;transform:scaleX(0.9000);transform-origin:0 0;">Height:</div>
<div class="a " style="left:1212px;top:485.0px;width:163px;height:27.0px;background:#464646;border:1px solid #4c4c4c;border-radius:3px;"></div>
<div class="t" style="left:1224.0px;top:492.5px;font-size:12.5px;line-height:12.5px;color:#e3e3e3;font-weight:normal;font-family:'Liberation Sans', sans-serif;transform:scaleX(0.9000);transform-origin:0 0;">6096</div>
<div class="t" style="left:1384.0px;top:492.2px;font-size:13px;line-height:13px;color:#e3e3e3;font-weight:normal;font-family:'Liberation Sans', sans-serif;transform:scaleX(0.9000);transform-origin:0 0;">px</div>
<div class="a " style="left:1342px;top:521px;width:48px;height:21px;background:#4b4b4b;border:1px solid #4f4f4f;border-radius:3px"></div>
<div class="t" style="left:1351.9px;top:525.7px;font-size:12px;line-height:12px;color:#777;font-weight:normal;font-family:'Liberation Sans', sans-serif;transform:scaleX(0.9000);transform-origin:0 0;">Reset</div>
<div class="a " style="left:1131px;top:565px;width:274px;height:77px;border:1px solid #4a4a4a;border-radius:2px"></div>
<div class="a " style="left:1141px;top:563px;width:59px;height:5px;background:#535353"></div>
<div class="t" style="left:1146.0px;top:559.7px;font-size:13px;line-height:13px;color:#e3e3e3;font-weight:normal;font-family:'Liberation Sans', sans-serif;transform:scaleX(0.9041);transform-origin:0 0;">Metadata</div>
<div class="a " style="left:1146px;top:585px;width:13px;height:13px;background:#3d8ee8;border-radius:50%;border:1px solid #5aa0ee"></div>
<div class="a " style="left:1150px;top:589px;width:5px;height:5px;background:#fff;border-radius:50%"></div>
<div class="t" style="left:1167.0px;top:585.2px;font-size:13px;line-height:13px;color:#e3e3e3;font-weight:normal;font-family:'Liberation Sans', sans-serif;transform:scaleX(0.9000);transform-origin:0 0;">None</div>
<div class="a " style="left:1146px;top:614px;width:13px;height:13px;border:1.5px solid #9a9a9a;border-radius:50%"></div>
<div class="t" style="left:1167.0px;top:614.2px;font-size:13px;line-height:13px;color:#e3e3e3;font-weight:normal;font-family:'Liberation Sans', sans-serif;transform:scaleX(0.8924);transform-origin:0 0;">Copyright and Contact Info</div>
<div class="a " style="left:1131px;top:658px;width:274px;height:72px;border:1px solid #4a4a4a;border-radius:2px"></div>
<div class="a " style="left:1141px;top:656px;width:71px;height:5px;background:#535353"></div>
<div class="t" style="left:1146.0px;top:652.7px;font-size:13px;line-height:13px;color:#e3e3e3;font-weight:normal;font-family:'Liberation Sans', sans-serif;transform:scaleX(0.8527);transform-origin:0 0;">Color Space</div>
<div class="a " style="left:1147px;top:676px;width:14px;height:14px;background:#e8e8e8;border-radius:2px"></div>
<svg class="a" style="left:1147px;top:676px;" width="14" height="14" viewBox="0 0 14 14"><path d="M3.1 7.3L5.9 10.1L11.2 4.2" fill="none" stroke="#333" stroke-width="1.8"/></svg>
<div class="t" style="left:1169.0px;top:676.7px;font-size:13px;line-height:13px;color:#e3e3e3;font-weight:normal;font-family:'Liberation Sans', sans-serif;transform:scaleX(0.9000);transform-origin:0 0;">Convert to sRGB</div>
<div class="a " style="left:1147px;top:701px;width:14px;height:14px;background:#e8e8e8;border-radius:2px"></div>
<svg class="a" style="left:1147px;top:701px;" width="14" height="14" viewBox="0 0 14 14"><path d="M3.1 7.3L5.9 10.1L11.2 4.2" fill="none" stroke="#333" stroke-width="1.8"/></svg>
<div class="t" style="left:1169.0px;top:701.7px;font-size:13px;line-height:13px;color:#e3e3e3;font-weight:normal;font-family:'Liberation Sans', sans-serif;transform:scaleX(0.9000);transform-origin:0 0;">Embed Color Profile</div>
<div class="t" style="left:1130.0px;top:742.2px;font-size:13px;line-height:13px;color:#e3e3e3;font-weight:normal;font-family:'Liberation Sans', sans-serif;transform:scaleX(0.9063);transform-origin:0 0;">Learn more about</div>
<div class="t" style="left:1226.0px;top:742.2px;font-size:13px;line-height:13px;color:#4b9cf0;font-weight:normal;font-family:'Liberation Sans', sans-serif;transform:scaleX(0.9030);transform-origin:0 0;">export options.</div>
<div class="t" style="left:1131.5px;top:824.2px;font-size:12px;line-height:12px;color:#e0e0e0;font-weight:normal;font-family:'Liberation Sans', sans-serif;transform:scaleX(0.8058);transform-origin:0 0;">v5.11.2</div>
<div class="a " style="left:1263px;top:811px;width:62px;height:29px;border:2px solid #e8e8e8;border-radius:15px"></div>
<div class="t" style="left:1277.5px;top:818.7px;font-size:13px;line-height:13px;color:#f0f0f0;font-weight:bold;font-family:'Liberation Sans', sans-serif;transform:scaleX(0.8328);transform-origin:0 0;">Cancel</div>
<div class="a " style="left:1339px;top:811px;width:65px;height:29px;background:#1473e6;border-radius:15px"></div>
<div class="t" style="left:1353.4px;top:818.7px;font-size:13px;line-height:13px;color:#fff;font-weight:bold;font-family:'Liberation Sans', sans-serif;transform:scaleX(0.8744);transform-origin:0 0;">Export</div>
<div class="a " style="left:1208px;top:158px;width:170px;height:100px;background:#474747;border-radius:2px"></div>
<div class="a " style="left:1212px;top:161px;width:162px;height:95px;background:#2a2a2a;border-radius:3px"></div>
<div class="t" style="left:1222.0px;top:173.0px;font-size:13px;line-height:13px;color:#e3e3e3;font-weight:normal;font-family:'Liberation Sans', sans-serif;transform:scaleX(0.9000);transform-origin:0 0;">PNG</div>
<div class="a " style="left:1212px;top:193px;width:162px;height:30px;background:#333"></div>
<div class="t" style="left:1222.0px;top:202.7px;font-size:13px;line-height:13px;color:#e3e3e3;font-weight:normal;font-family:'Liberation Sans', sans-serif;transform:scaleX(0.9000);transform-origin:0 0;">JPG</div>
<svg class="a" style="left:1353px;top:203px;" width="13" height="11" viewBox="0 0 13 11"><path d="M1.5 5.5L5 9L11.5 1.5" fill="none" stroke="#4a7cc8" stroke-width="1.6"/></svg>
<div class="t" style="left:1222.0px;top:231.7px;font-size:13px;line-height:13px;color:#e3e3e3;font-weight:normal;font-family:'Liberation Sans', sans-serif;transform:scaleX(0.9000);transform-origin:0 0;">GIF</div>
<div class="a " style="left:1201px;top:184px;width:195px;height:45px;border:3.5px solid #d83a48"></div>
<div class="a " style="left:1325px;top:781px;width:89px;height:89px;border:3.5px solid #e03a48"></div>
<svg class="a" style="left:662px;top:260px;" width="414" height="414" viewBox="0 0 414 414"><circle cx="205.5" cy="206.5" r="131" fill="none" stroke="#0b0b0b" stroke-width="6"/><circle cx="207" cy="205.5" r="82.5" fill="#d8a2dc" stroke="#111" stroke-width="3"/><g transform="rotate(40 209.7 158.2)"><path d="M192.7 158.2C199.5 146.5 218.2 146.5 226.7 158.2C218.2 169.9 199.5 169.9 192.7 158.2Z" fill="#3c8a3e"/><path d="M194.4 158.2H225.0" stroke="#9fd08a" stroke-width="0.8"/></g><g transform="rotate(10 259.4 170.6)"><path d="M244.4 170.6C250.4 157.6 266.9 157.6 274.4 170.6C266.9 183.6 250.4 183.6 244.4 170.6Z" fill="#3c8a3e"/><path d="M245.9 170.6H272.9" stroke="#9fd08a" stroke-width="0.8"/></g><g transform="rotate(28 148.6 196.4)"><path d="M129.6 196.4C137.2 184.7 158.1 184.7 167.6 196.4C158.1 208.1 137.2 208.1 129.6 196.4Z" fill="#3c8a3e"/><path d="M131.5 196.4H165.7" stroke="#9fd08a" stroke-width="0.8"/></g><g transform="rotate(80 175.3 208.9)"><path d="M163.3 208.9C168.1 197.2 181.3 197.2 187.3 208.9C181.3 220.6 168.1 220.6 163.3 208.9Z" fill="#3c8a3e"/><path d="M164.5 208.9H186.1" stroke="#9fd08a" stroke-width="0.8"/></g><g transform="rotate(-25 158.1 227)"><path d="M142.1 227C148.5 216.6 166.1 216.6 174.1 227C166.1 237.4 148.5 237.4 142.1 227Z" fill="#3c8a3e"/><path d="M143.7 227H172.5" stroke="#9fd08a" stroke-width="0.8"/></g><g transform="rotate(20 160 217.5)"><path d="M152.0 217.5C155.2 211.0 164.0 211.0 168.0 217.5C164.0 224.0 155.2 224.0 152.0 217.5Z" fill="#3c8a3e"/><path d="M152.8 217.5H167.2" stroke="#9fd08a" stroke-width="0.8"/></g><g transform="rotate(15 260.4 232.7)"><path d="M244.4 232.7C250.8 221.0 268.4 221.0 276.4 232.7C268.4 244.4 250.8 244.4 244.4 232.7Z" fill="#3c8a3e"/><path d="M246.0 232.7H274.8" stroke="#9fd08a" stroke-width="0.8"/></g><g transform="rotate(110 231.7 251.9)"><path d="M216.7 251.9C222.7 240.2 239.2 240.2 246.7 251.9C239.2 263.6 222.7 263.6 216.7 251.9Z" fill="#3c8a3e"/><path d="M218.2 251.9H245.2" stroke="#9fd08a" stroke-width="0.8"/></g><g transform="rotate(65 248 253.8)"><path d="M231.0 253.8C237.8 240.8 256.5 240.8 265.0 253.8C256.5 266.8 237.8 266.8 231.0 253.8Z" fill="#3c8a3e"/><path d="M232.7 253.8H263.3" stroke="#9fd08a" stroke-width="0.8"/></g><ellipse cx="161" cy="170.2" rx="7.2" ry="9.4" fill="#c8142e" transform="rotate(10 161 179.2)"/><ellipse cx="161" cy="170.2" rx="7.2" ry="9.4" fill="#c8142e" transform="rotate(82 161 179.2)"/><ellipse cx="161" cy="170.2" rx="7.2" ry="9.4" fill="#c8142e" transform="rotate(154 161 179.2)"/><ellipse cx="161" cy="170.2" rx="7.2" ry="9.4" fill="#c8142e" transform="rotate(226 161 179.2)"/><ellipse cx="161" cy="170.2" rx="7.2" ry="9.4" fill="#c8142e" transform="rotate(298 161 179.2)"/><circle cx="161" cy="179.2" r="4.0" fill="#e04060"/><ellipse cx="230.7" cy="173.2" rx="6.4" ry="8.3" fill="#e45ab6" transform="rotate(30 230.7 181.2)"/><ellipse cx="230.7" cy="173.2" rx="6.4" ry="8.3" fill="#e45ab6" transform="rotate(102 230.7 181.2)"/><ellipse cx="230.7" cy="173.2" rx="6.4" ry="8.3" fill="#e45ab6" transform="rotate(174 230.7 181.2)"/><ellipse cx="230.7" cy="173.2" rx="6.4" ry="8.3" fill="#e45ab6" transform="rotate(246 230.7 181.2)"/><ellipse cx="230.7" cy="173.2" rx="6.4" ry="8.3" fill="#e45ab6" transform="rotate(318 230.7 181.2)"/><circle cx="230.7" cy="181.2" r="3.5" fill="#c82078"/><ellipse cx="236.5" cy="148.2" rx="8.0" ry="10.4" fill="#ea66bd" transform="rotate(5 236.5 158.2)"/><ellipse cx="236.5" cy="148.2" rx="8.0" ry="10.4" fill="#ea66bd" transform="rotate(77 236.5 158.2)"/><ellipse cx="236.5" cy="148.2" rx="8.0" ry="10.4" fill="#ea66bd" transform="rotate(149 236.5 158.2)"/><ellipse cx="236.5" cy="148.2" rx="8.0" ry="10.4" fill="#ea66bd" transform="rotate(221 236.5 158.2)"/><ellipse cx="236.5" cy="148.2" rx="8.0" ry="10.4" fill="#ea66bd" transform="rotate(293 236.5 158.2)"/><circle cx="236.5" cy="158.2" r="4.4" fill="#d02a7a"/><ellipse cx="196.3" cy="179.7" rx="8.8" ry="11.4" fill="#d51a52" transform="rotate(-10 196.3 190.7)"/><ellipse cx="196.3" cy="179.7" rx="8.8" ry="11.4" fill="#d51a52" transform="rotate(62 196.3 190.7)"/><ellipse cx="196.3" cy="179.7" rx="8.8" ry="11.4" fill="#d51a52" transform="rotate(134 196.3 190.7)"/><ellipse cx="196.3" cy="179.7" rx="8.8" ry="11.4" fill="#d51a52" transform="rotate(206 196.3 190.7)"/><ellipse cx="196.3" cy="179.7" rx="8.8" ry="11.4" fill="#d51a52" transform="rotate(278 196.3 190.7)"/><circle cx="196.3" cy="190.7" r="4.8" fill="#f04a70"/><ellipse cx="205" cy="222.7" rx="8.0" ry="10.4" fill="#ebcdee" transform="rotate(-15 205 232.7)"/><ellipse cx="205" cy="222.7" rx="8.0" ry="10.4" fill="#ebcdee" transform="rotate(57 205 232.7)"/><ellipse cx="205" cy="222.7" rx="8.0" ry="10.4" fill="#ebcdee" transform="rotate(129 205 232.7)"/><ellipse cx="205" cy="222.7" rx="8.0" ry="10.4" fill="#ebcdee" transform="rotate(201 205 232.7)"/><ellipse cx="205" cy="222.7" rx="8.0" ry="10.4" fill="#ebcdee" transform="rotate(273 205 232.7)"/><circle cx="205" cy="232.7" r="4.4" fill="#d88ab8"/><ellipse cx="237.4" cy="197.8" rx="9.6" ry="12.5" fill="#f2bfe4" transform="rotate(15 237.4 209.8)"/><ellipse cx="237.4" cy="197.8" rx="9.6" ry="12.5" fill="#f2bfe4" transform="rotate(87 237.4 209.8)"/><ellipse cx="237.4" cy="197.8" rx="9.6" ry="12.5" fill="#f2bfe4" transform="rotate(159 237.4 209.8)"/><ellipse cx="237.4" cy="197.8" rx="9.6" ry="12.5" fill="#f2bfe4" transform="rotate(231 237.4 209.8)"/><ellipse cx="237.4" cy="197.8" rx="9.6" ry="12.5" fill="#f2bfe4" transform="rotate(303 237.4 209.8)"/><circle cx="237.4" cy="209.8" r="5.3" fill="#e02a6e"/><ellipse cx="215.5" cy="207.1" rx="5.2" ry="6.8" fill="#f3cdec" transform="rotate(0 215.5 213.6)"/><ellipse cx="215.5" cy="207.1" rx="5.2" ry="6.8" fill="#f3cdec" transform="rotate(72 215.5 213.6)"/><ellipse cx="215.5" cy="207.1" rx="5.2" ry="6.8" fill="#f3cdec" transform="rotate(144 215.5 213.6)"/><ellipse cx="215.5" cy="207.1" rx="5.2" ry="6.8" fill="#f3cdec" transform="rotate(216 215.5 213.6)"/><ellipse cx="215.5" cy="207.1" rx="5.2" ry="6.8" fill="#f3cdec" transform="rotate(288 215.5 213.6)"/><circle cx="215.5" cy="213.6" r="2.9" fill="#e03070"/><ellipse cx="177.2" cy="151.5" rx="3" ry="5" fill="#de6fb4" transform="rotate(-20 177.2 151.5)"/><ellipse cx="270.9" cy="188.8" rx="5" ry="3" fill="#de6fb4" transform="rotate(-10 270.9 188.8)"/><ellipse cx="177.2" cy="246" rx="4" ry="3" fill="#de6fb4" transform="rotate(0 177.2 246)"/><ellipse cx="190.6" cy="248" rx="3" ry="5" fill="#de6fb4" transform="rotate(10 190.6 248)"/><path id="tp1" d="M110.5 206.5 A95 95 0 0 1 300.5 206.5" fill="none"/><path id="tp2" d="M91.5 206.5 A114 114 0 0 0 319.5 206.5" fill="none"/><text x="134.5" y="142.6" font-size="31" fill="#c43a3a" text-anchor="middle" transform="rotate(-48.0 134.5 142.6)" font-family="'Liberation Sans', sans-serif">ร้</text><text x="144.8" y="132.8" font-size="31" fill="#c43a3a" text-anchor="middle" transform="rotate(-39.5 144.8 132.8)" font-family="'Liberation Sans', sans-serif">า</text><text x="159.6" y="122.7" font-size="31" fill="#c43a3a" text-anchor="middle" transform="rotate(-28.7 159.6 122.7)" font-family="'Liberation Sans', sans-serif">น</text><text x="179.5" y="114.6" font-size="31" fill="#c43a3a" text-anchor="middle" transform="rotate(-15.8 179.5 114.6)" font-family="'Liberation Sans', sans-serif">ข</text><text x="195.8" y="111.5" font-size="31" fill="#c43a3a" text-anchor="middle" transform="rotate(-5.8 195.8 111.5)" font-family="'Liberation Sans', sans-serif">า</text><text x="211.0" y="111.2" font-size="31" fill="#c43a3a" text-anchor="middle" transform="rotate(3.3 211.0 111.2)" font-family="'Liberation Sans', sans-serif">ย</text><text x="231.0" y="114.5" font-size="31" fill="#c43a3a" text-anchor="middle" transform="rotate(15.5 231.0 114.5)" font-family="'Liberation Sans', sans-serif">ด</text><text x="248.6" y="121.3" font-size="31" fill="#c43a3a" text-anchor="middle" transform="rotate(26.8 248.6 121.3)" font-family="'Liberation Sans', sans-serif">อ</text><text x="264.3" y="131.2" font-size="31" fill="#c43a3a" text-anchor="middle" transform="rotate(38.0 264.3 131.2)" font-family="'Liberation Sans', sans-serif">ก</text><text x="276.1" y="142.2" font-size="31" fill="#c43a3a" text-anchor="middle" transform="rotate(47.7 276.1 142.2)" font-family="'Liberation Sans', sans-serif">ไ</text><text x="287.1" y="156.9" font-size="31" fill="#c43a3a" text-anchor="middle" transform="rotate(58.7 287.1 156.9)" font-family="'Liberation Sans', sans-serif">ม้</text><text font-size="33" fill="#c3302c" font-family="'Liberation Serif', serif"><textPath href="#tp2" startOffset="48.2" textLength="268.6" lengthAdjust="spacing">By Benyapha yotyot</textPath></text></svg>
<div class="t" style="left:42.0px;top:928.2px;font-size:12px;line-height:12px;color:#e0e0e0;font-weight:normal;font-family:'Liberation Sans', sans-serif;transform:scaleX(0.9583);transform-origin:0 0;">14.73%</div>
<div class="t" style="left:98.0px;top:928.7px;font-size:10px;line-height:10px;color:#d0d0d0;font-weight:normal;font-family:'Liberation Sans', sans-serif;transform:scaleX(0.8884);transform-origin:0 0;">6096 px x 6096 px (300 ppcm)</div>
<svg class="a" style="left:238px;top:929px;" width="6" height="10" viewBox="0 0 6 10"><path d="M1 1L5 5L1 9" fill="none" stroke="#ccc" stroke-width="1.2"/></svg>
<svg class="a" style="left:255px;top:929px;" width="6" height="10" viewBox="0 0 6 10"><path d="M5 1L1 5L5 9" fill="none" stroke="#888" stroke-width="1.2"/></svg>
<svg class="a" style="left:1415px;top:929px;" width="6" height="10" viewBox="0 0 6 10"><path d="M1 1L5 5L1 9" fill="none" stroke="#888" stroke-width="1.2"/></svg>
<svg class="a" style="left:1430px;top:913px;" width="9" height="6" viewBox="0 0 9 6"><path d="M1 1L4.5 4.5L8 1" fill="none" stroke="#888" stroke-width="1.1"/></svg>
<svg class="a" style="left:1430px;top:84px;" width="9" height="6" viewBox="0 0 9 6"><path d="M1 5L4.5 1.5L8 5" fill="none" stroke="#888" stroke-width="1.1"/></svg>
<div class="a " style="left:1430px;top:368px;width:10px;height:297px;background:#5a5a5a"></div>
<div class="t" style="left:1455.0px;top:859.8px;font-size:17px;line-height:17px;color:rgba(200,200,200,0.55);font-weight:normal;font-family:'Liberation Sans', sans-serif;transform:scaleX(0.9558);transform-origin:0 0;">เปิดใช้งาน Windows</div>
<div class="t" style="left:1455.0px;top:881.2px;font-size:13px;line-height:13px;color:rgba(200,200,200,0.55);font-weight:normal;font-family:'Liberation Sans', sans-serif;transform:scaleX(0.9513);transform-origin:0 0;">ไปที่ การตั้งค่า เพื่อเปิดใช้งาน Windows</div></body></html>
